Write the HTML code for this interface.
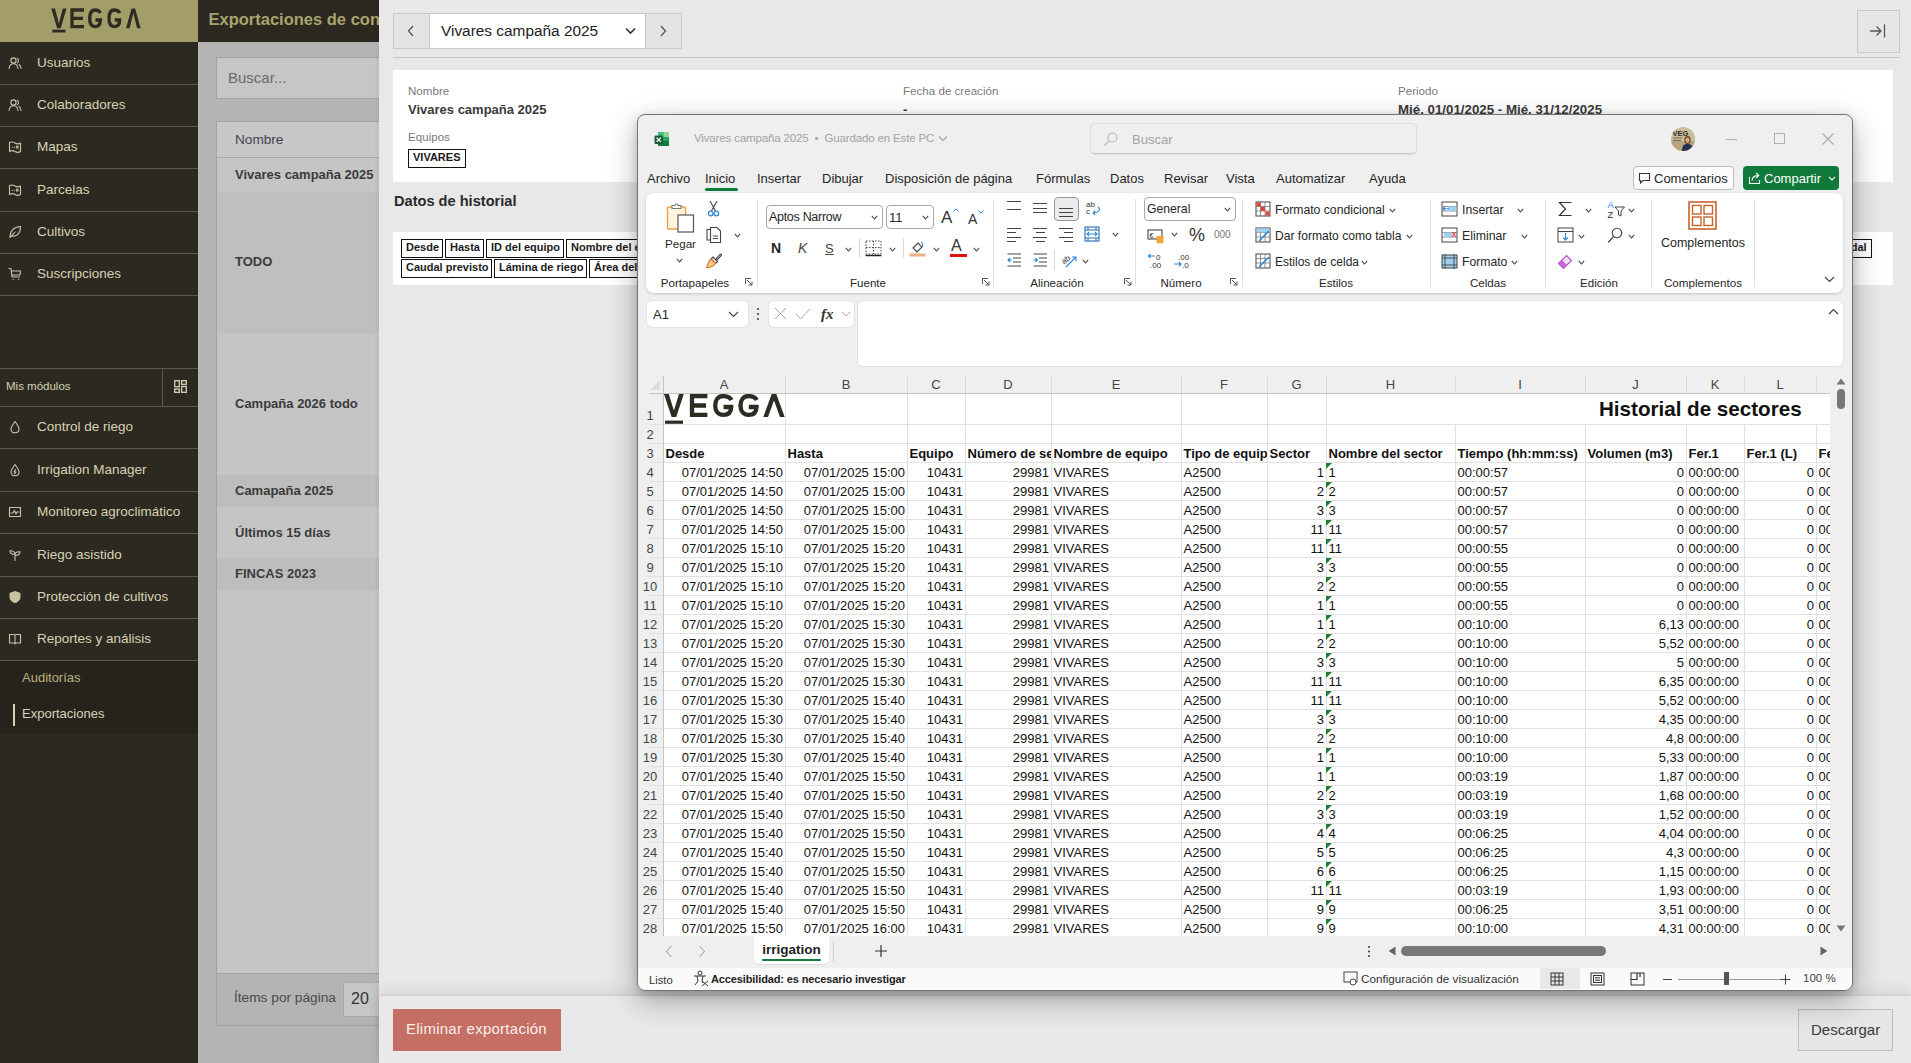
<!DOCTYPE html><html><head><meta charset="utf-8"><style>
*{box-sizing:border-box;margin:0;padding:0}
html,body{width:1911px;height:1063px;overflow:hidden;font-family:"Liberation Sans",sans-serif;background:#e8e8e8}
.abs{position:absolute}
.t{position:absolute;white-space:nowrap;line-height:1}
#sb{left:0;top:0;width:198px;height:1063px;background:#2c2920}
#logo{left:0;top:0;width:198px;height:42px;background:#a39e69}
.sl{position:absolute;left:0;width:198px;height:1px;background:#5a574e}
.mt{position:absolute;left:37px;color:#d8d3b6;font-size:13.5px;white-space:nowrap;line-height:1}
.ic{position:absolute;left:9px}
#mid{left:198px;top:0;width:181px;height:1063px;background:#b5b5b5;overflow:hidden}
#midh{left:0;top:0;width:181px;height:42px;background:#2c2820;color:#a9a36f;font-weight:bold;font-size:16.5px;white-space:nowrap}
.row{position:absolute;left:19px;width:170px}
.rt{position:absolute;left:18px;font-size:13px;font-weight:bold;color:#3b3b3b;white-space:nowrap;line-height:1}
#drawer{left:379px;top:0;width:1532px;height:1063px;background:#e8e8e8;box-shadow:-3px 0 3px rgba(0,0,0,0.04)}
.card{position:absolute;background:#fff}
.lbl{position:absolute;font-size:11.6px;color:#7a7a7a;white-space:nowrap;line-height:1}
.val{position:absolute;font-size:13px;font-weight:bold;color:#3a3a3a;white-space:nowrap;line-height:1}
.tag{position:absolute;height:19px;border:1.5px solid #111;font-size:11px;font-weight:bold;color:#1a1a1a;padding:2px 0 0 4px;white-space:nowrap;overflow:hidden;background:#fff;line-height:1}
#xl{left:637px;top:114px;width:1216px;height:876px;background:#efefef;border:1px solid #6e6e6e;border-radius:8px;overflow:hidden;box-shadow:0 6px 22px rgba(0,0,0,0.22)}
</style></head><body>
<div id="sb" class="abs">
<div id="logo" class="abs"></div>
<svg class="abs" style="left:50px;top:8px" width="94" height="26" viewBox="0 0 94 26">
<g fill="none" stroke="#2e2b22" stroke-width="3.3">

<path d="M34 2 H22 V18.7 H34 M22 10.3 H33"/>
<path d="M50.5 5 C49.5 3 47.8 2 45 2 C41.3 2 39.7 5.5 39.7 10.3 C39.7 15 41.3 18.6 45 18.6 C48.7 18.6 50.4 16 50.4 12 H45.5"/>
<path d="M69.8 5 C68.8 3 67.1 2 64.3 2 C60.6 2 59 5.5 59 10.3 C59 15 60.6 18.6 64.3 18.6 C68 18.6 69.7 16 69.7 12 H64.8"/>
</g>
<rect x="2.3" y="21.7" width="13.2" height="2.8" fill="#2e2b22"/><path d="M1.3 0.5 H5 L8.9 15.5 L12.8 0.5 H16.5 L10.7 20.2 H7.1 Z M76 20.2 H79.6 L83.35 5 L87.1 20.2 H90.7 L85.1 0.5 H81.6 Z" fill="#2e2b22"/>
</svg>
<div class="mt" style="top:56px">Usuarios</div>
<div class="mt" style="top:98px">Colaboradores</div>
<div class="mt" style="top:140px">Mapas</div>
<div class="mt" style="top:183px">Parcelas</div>
<div class="mt" style="top:225px">Cultivos</div>
<div class="mt" style="top:267px">Suscripciones</div>
<div class="sl" style="top:84px"></div>
<div class="sl" style="top:126px"></div>
<div class="sl" style="top:168px"></div>
<div class="sl" style="top:211px"></div>
<div class="sl" style="top:253px"></div>
<div class="sl" style="top:295px"></div>
<div class="sl" style="top:368px"></div>
<div class="sl" style="top:406px"></div>
<div class="sl" style="top:448px"></div>
<div class="sl" style="top:491px"></div>
<div class="sl" style="top:533px"></div>
<div class="sl" style="top:576px"></div>
<div class="sl" style="top:618px"></div>
<div class="sl" style="top:660px"></div>
<div class="abs" style="left:162px;top:368px;width:1px;height:38px;background:#5a574e"></div>
<div class="t" style="left:6px;top:381px;font-size:11.5px;color:#d8d3b6">Mis módulos</div>
<svg class="abs" style="left:174px;top:380px" width="13" height="13" viewBox="0 0 13 13"><g fill="none" stroke="#d8d3b6" stroke-width="1.3"><rect x="0.7" y="0.7" width="4.6" height="6"/><rect x="7.7" y="0.7" width="4.6" height="3.6"/><rect x="0.7" y="9" width="4.6" height="3.3"/><rect x="7.7" y="6.5" width="4.6" height="5.8"/></g></svg>
<div class="mt" style="top:420px">Control de riego</div>
<div class="mt" style="top:463px">Irrigation Manager</div>
<div class="mt" style="top:505px">Monitoreo agroclimático</div>
<div class="mt" style="top:548px">Riego asistido</div>
<div class="mt" style="top:590px">Protección de cultivos</div>
<div class="mt" style="top:632px">Reportes y análisis</div>
<div class="abs" style="left:0;top:661px;width:198px;height:73px;background:#26231d"></div>
<div class="t" style="left:22px;top:671px;font-size:13px;color:#b9b37e">Auditorías</div>
<div class="t" style="left:22px;top:707px;font-size:13px;color:#d8d3b6">Exportaciones</div>
<div class="abs" style="left:13px;top:704px;width:1.5px;height:22px;background:#d8d3b6"></div>
<svg class="abs" style="left:8px;top:56px" width="14" height="14" viewBox="0 0 14 14"><g fill="none" stroke="#c9c4ac" stroke-width="1.1" stroke-linecap="round" stroke-linejoin="round"><circle cx="5.5" cy="4.5" r="2.6"/><path d="M1 12.5 C1.5 9 3.5 7.8 5.5 7.8 C7.5 7.8 9.5 9 10 12.5"/><path d="M9.3 2.2 C10.8 2.8 10.8 6 9.3 6.8 M11 8.5 C12.3 9.2 12.8 10.8 13 12.5"/></g></svg>
<svg class="abs" style="left:8px;top:98px" width="14" height="14" viewBox="0 0 14 14"><g fill="none" stroke="#c9c4ac" stroke-width="1.1" stroke-linecap="round" stroke-linejoin="round"><circle cx="5.5" cy="4.5" r="2.6"/><path d="M1 12.5 C1.5 9 3.5 7.8 5.5 7.8 C7.5 7.8 9.5 9 10 12.5"/><path d="M9.3 2.2 C10.8 2.8 10.8 6 9.3 6.8 M11 8.5 C12.3 9.2 12.8 10.8 13 12.5"/></g></svg>
<svg class="abs" style="left:8px;top:140px" width="14" height="14" viewBox="0 0 14 14"><g fill="none" stroke="#c9c4ac" stroke-width="1.1" stroke-linecap="round" stroke-linejoin="round"><path d="M1.5 2.5 C3.5 1.5 5 1.8 7 3 C9 4.2 10.5 4.2 12.5 3 V11.5 C10.5 12.7 9 12.7 7 11.5 C5 10.3 3.5 10.3 1.5 11.5 Z"/><path d="M4.3 7.3 H4.6 M6.3 7.3 H6.6 M8.3 6.2 L10.2 8.2 M10.2 6.2 L8.3 8.2"/></g></svg>
<svg class="abs" style="left:8px;top:183px" width="14" height="14" viewBox="0 0 14 14"><g fill="none" stroke="#c9c4ac" stroke-width="1.1" stroke-linecap="round" stroke-linejoin="round"><path d="M1.5 2.5 C3.5 1.5 5 1.8 7 3 C9 4.2 10.5 4.2 12.5 3 V11.5 C10.5 12.7 9 12.7 7 11.5 C5 10.3 3.5 10.3 1.5 11.5 Z"/><path d="M4.3 7.3 H4.6 M6.3 7.3 H6.6 M8.3 6.2 L10.2 8.2 M10.2 6.2 L8.3 8.2"/></g></svg>
<svg class="abs" style="left:8px;top:225px" width="14" height="14" viewBox="0 0 14 14"><g fill="none" stroke="#c9c4ac" stroke-width="1.1" stroke-linecap="round" stroke-linejoin="round"><path d="M2 12.5 C2 6 6 2 12.5 1.5 C12.5 8 9 12 3.5 11 M2 12.5 L7 7"/></g></svg>
<svg class="abs" style="left:8px;top:267px" width="14" height="14" viewBox="0 0 14 14"><g fill="none" stroke="#c9c4ac" stroke-width="1.1" stroke-linecap="round" stroke-linejoin="round"><path d="M1 1.5 H3 L4 10 H11.5 M3.3 4 H12.5 L12 8 H3.8 M5 12.5 H5.3 M10.5 12.5 H10.8"/></g></svg>
<svg class="abs" style="left:8px;top:420px" width="14" height="14" viewBox="0 0 14 14"><g fill="none" stroke="#c9c4ac" stroke-width="1.1" stroke-linecap="round" stroke-linejoin="round"><path d="M7 1.5 C9 4.5 11 6.5 11 9 C11 11.3 9.2 12.8 7 12.8 C4.8 12.8 3 11.3 3 9 C3 6.5 5 4.5 7 1.5 Z"/></g></svg>
<svg class="abs" style="left:8px;top:463px" width="14" height="14" viewBox="0 0 14 14"><g fill="none" stroke="#c9c4ac" stroke-width="1.1" stroke-linecap="round" stroke-linejoin="round"><path d="M7 1.5 C9 4.5 11 6.5 11 9 C11 11.3 9.2 12.8 7 12.8 C4.8 12.8 3 11.3 3 9 C3 6.5 5 4.5 7 1.5 Z"/><path d="M7.5 6.5 L6 9 H8 L6.5 11"/></g></svg>
<svg class="abs" style="left:8px;top:505px" width="14" height="14" viewBox="0 0 14 14"><g fill="none" stroke="#c9c4ac" stroke-width="1.1" stroke-linecap="round" stroke-linejoin="round"><rect x="1.5" y="2.5" width="11" height="9"/><path d="M3 8 H5 L6.5 5.5 L8 9 L9 7 H11"/></g></svg>
<svg class="abs" style="left:8px;top:548px" width="14" height="14" viewBox="0 0 14 14"><g fill="none" stroke="#c9c4ac" stroke-width="1.1" stroke-linecap="round" stroke-linejoin="round"><path d="M7 12.5 V6.5 C7 4 5 2.5 2 2.8 C2 5.5 3.8 6.5 7 6.5 C7 4.5 9 3.5 12 3.8 C12 6.5 10 7.5 7 7.5"/></g></svg>
<svg class="abs" style="left:8px;top:590px" width="14" height="14" viewBox="0 0 14 14"><path d="M7 1 L12.5 3 V7 C12.5 10 10 12.3 7 13 C4 12.3 1.5 10 1.5 7 V3 Z" fill="#c7c2a0"/></svg>
<svg class="abs" style="left:8px;top:632px" width="14" height="14" viewBox="0 0 14 14"><g fill="none" stroke="#c9c4ac" stroke-width="1.1" stroke-linecap="round" stroke-linejoin="round"><path d="M1.5 2.5 H6 C6.6 2.5 7 2.9 7 3.5 V12 C7 11.5 6.5 11 6 11 H1.5 Z M12.5 2.5 H8 C7.4 2.5 7 2.9 7 3.5 V12 C7 11.5 7.5 11 8 11 H12.5 Z"/></g></svg>
</div>
<div id="mid" class="abs">
<div id="midh" class="abs"><span class="t" style="left:10.5px;top:11px;color:#a9a36f">Exportaciones de configuración</span></div>
<div class="abs" style="left:18px;top:57px;width:200px;height:42px;background:#c6c6c6;border:1px solid #a3a3a3"></div>
<div class="t" style="left:30px;top:70px;font-size:15px;color:#6a6a6a">Buscar...</div>
<div class="abs" style="left:18px;top:121px;width:200px;height:905px;border:1px solid #a3a3a3;background:#c5c5c5"></div>
<div class="abs" style="left:19px;top:122px;width:200px;height:36px;background:#c8c8c8;border-bottom:1px solid #a8a8a8"></div>
<div class="t" style="left:37px;top:133px;font-size:13.6px;color:#3f4650">Nombre</div>
<div class="row" style="top:159px;height:33px;background:#c5c5c5"></div>
<div class="rt" style="left:37px;top:168px">Vivares campaña 2025</div>
<div class="row" style="top:192px;height:141px;background:#bfbfbf"></div>
<div class="rt" style="left:37px;top:255px">TODO</div>
<div class="row" style="top:333px;height:142px;background:#c5c5c5"></div>
<div class="rt" style="left:37px;top:397px">Campaña 2026 todo</div>
<div class="row" style="top:475px;height:32px;background:#bdbdbd"></div>
<div class="rt" style="left:37px;top:484px">Camapaña 2025</div>
<div class="row" style="top:507px;height:51px;background:#c5c5c5"></div>
<div class="rt" style="left:37px;top:526px">Últimos 15 días</div>
<div class="row" style="top:558px;height:32px;background:#bdbdbd"></div>
<div class="rt" style="left:37px;top:567px">FINCAS 2023</div>
<div class="abs" style="left:18px;top:973px;width:200px;height:53px;background:#b4b4b4;border:1px solid #a3a3a3"></div>
<div class="t" style="left:36px;top:991px;font-size:13.7px;color:#4a4a4a">Ítems por página</div>
<div class="abs" style="left:145px;top:982px;width:60px;height:35px;background:#c6c6c6;border:1px solid #a8a8a8"></div>
<div class="t" style="left:153px;top:991px;font-size:16px;color:#333">20</div>
</div>
<div id="drawer" class="abs">
<div class="abs" style="left:14px;top:13px;width:289px;height:36px;border:1px solid #c8c8c8;background:#e4e4e4"></div>
<div class="abs" style="left:50px;top:14px;width:217px;height:34px;background:#fff;border-left:1px solid #c8c8c8;border-right:1px solid #c8c8c8"></div>
<div class="t" style="left:62px;top:23px;font-size:15.4px;color:#222">Vivares campaña 2025</div>
<svg class="abs" style="left:246px;top:27px" width="11" height="8" viewBox="0 0 11 8"><path d="M1 1.5 L5.5 6 L10 1.5" fill="none" stroke="#333" stroke-width="1.6"/></svg>
<svg class="abs" style="left:28px;top:25px" width="8" height="12" viewBox="0 0 8 12"><path d="M6 1 L1.5 6 L6 11" fill="none" stroke="#555" stroke-width="1.3"/></svg>
<svg class="abs" style="left:280px;top:25px" width="8" height="12" viewBox="0 0 8 12"><path d="M2 1 L6.5 6 L2 11" fill="none" stroke="#555" stroke-width="1.3"/></svg>
<div class="abs" style="left:1478px;top:10px;width:43px;height:43px;border:1px solid #c8c8c8;background:#e6e6e6"></div>
<svg class="abs" style="left:1490px;top:22px" width="18" height="18" viewBox="0 0 18 18"><path d="M1 9 H12 M7.5 4.5 L12 9 L7.5 13.5 M15.5 2.5 V15.5" fill="none" stroke="#555" stroke-width="1.3"/></svg>
<div class="abs" style="left:14px;top:57px;width:1507px;height:1px;background:#c4c4c4"></div>
<div class="card" style="left:14px;top:70px;width:1500px;height:112px"></div>
<div class="lbl" style="left:29px;top:85px">Nombre</div>
<div class="val" style="left:29px;top:103px">Vivares campaña 2025</div>
<div class="lbl" style="left:29px;top:131px">Equipos</div>
<div class="tag" style="left:29px;top:149px;width:58px">VIVARES</div>
<div class="lbl" style="left:524px;top:85px">Fecha de creación</div>
<div class="val" style="left:524px;top:103px">-</div>
<div class="lbl" style="left:1019px;top:85px">Periodo</div>
<div class="val" style="left:1019px;top:103px;font-size:13.3px">Mié. 01/01/2025 - Mié. 31/12/2025</div>
<div class="t" style="left:15px;top:194px;font-size:14.6px;font-weight:bold;color:#2a2a2a">Datos de historial</div>
<div class="card" style="left:14px;top:232px;width:1500px;height:53px"></div>
<div class="tag" style="left:22px;top:239px;width:42px">Desde</div>
<div class="tag" style="left:66px;top:239px;width:39px">Hasta</div>
<div class="tag" style="left:107px;top:239px;width:78px">ID del equipo</div>
<div class="tag" style="left:187px;top:239px;width:134px">Nombre del equipo</div>
<div class="tag" style="left:22px;top:259px;width:91px">Caudal previsto</div>
<div class="tag" style="left:115px;top:259px;width:93px">Lámina de riego</div>
<div class="tag" style="left:210px;top:259px;width:111px">Área del sector</div>
<div class="tag" style="left:1440px;top:239px;width:53px;padding-left:10px">Caudal</div>
<div class="abs" style="left:0;top:996px;width:1532px;height:67px;background:#e9e9e9;box-shadow:0 -4px 14px rgba(0,0,0,0.10),0 -1px 2px rgba(0,0,0,0.05)"></div>
<div class="abs" style="left:14px;top:1009px;width:168px;height:42px;background:#c46e64"></div>
<div class="t" style="left:27px;top:1021px;font-size:15px;letter-spacing:0.25px;color:#fbeeea">Eliminar exportación</div>
<div class="abs" style="left:1419px;top:1009px;width:95px;height:42px;border:1px solid #bcbcbc;background:#e6e6e6"></div>
<div class="t" style="left:1432px;top:1022px;font-size:15px;color:#3a3a3a">Descargar</div>
</div>
<div class="abs" style="left:637px;top:114px;width:1216px;height:877px;background:#efefef;border-radius:8px;box-shadow:0 10px 30px rgba(0,0,0,0.30),0 3px 8px rgba(0,0,0,0.16)"></div>
<svg class="abs" style="left:654px;top:131px" width="16" height="16" viewBox="0 0 16 16"><rect x="4" y="1" width="11" height="14" rx="1.5" fill="#21a366"/><rect x="4" y="1" width="5.5" height="5" fill="#33c481"/><rect x="9.5" y="1" width="5.5" height="5" fill="#9ad48a"/><rect x="4" y="10" width="11" height="5" fill="#107c41"/><rect x="0.5" y="4.5" width="8.5" height="8.5" rx="1.2" fill="#185c37"/><path d="M2.6 6.6 L6.9 10.9 M6.9 6.6 L2.6 10.9" stroke="#fff" stroke-width="1.3"/></svg>
<div class="t" style="left:694px;top:133.2px;font-size:11.5px;color:#a2a2a2;font-weight:normal;letter-spacing:-0.15px">Vivares campaña 2025 &nbsp;•&nbsp; Guardado en Este PC</div>
<svg class="abs" style="left:938px;top:135px" width="10" height="7" viewBox="0 0 10 7"><path d="M1 1.5 L5 5.5 L9 1.5" fill="none" stroke="#a2a2a2" stroke-width="1.1"/></svg>
<div class="abs" style="left:1090px;top:123px;width:327px;height:31px;background:#efefef;border:1px solid #dcdcdc;border-bottom-color:#c9c9c9;border-radius:5px;box-shadow:0 1px 1px rgba(0,0,0,0.06)"></div>
<svg class="abs" style="left:1103px;top:131px" width="16" height="16" viewBox="0 0 16 16"><circle cx="9.5" cy="6.5" r="4.5" fill="none" stroke="#b5b5b5" stroke-width="1.1"/><path d="M6.3 9.7 L1.5 14.5" stroke="#b5b5b5" stroke-width="1.2"/></svg>
<div class="t" style="left:1132px;top:132.5px;font-size:13px;color:#a3a3a3;font-weight:normal;">Buscar</div>
<svg class="abs" style="left:1671px;top:127px" width="24" height="24" viewBox="0 0 24 24"><defs><clipPath id="av"><circle cx="12" cy="12" r="12"/></clipPath></defs><g clip-path="url(#av)"><rect width="24" height="24" fill="#cbbd9a"/><rect y="14" width="24" height="10" fill="#b8a57e"/><text x="1.5" y="8.5" font-size="7.5" font-weight="bold" fill="#2e2c22" font-family="Liberation Sans">VEG</text><path d="M2 11 H11 M2 13.5 H10" stroke="#5a5040" stroke-width="0.8"/><ellipse cx="16.5" cy="13" rx="3.2" ry="4" fill="#6b4a2e"/><path d="M11 24 C11 18 13 17 16.5 17 C20 17 22 18 22 24 Z" fill="#26324e"/><ellipse cx="16.5" cy="13.2" rx="2" ry="2.6" fill="#d9a98a"/></g></svg>
<div class="abs" style="left:1726px;top:139px;width:11px;height:1px;background:#b0b0b0"></div>
<div class="abs" style="left:1774px;top:133px;width:11px;height:11px;border:1px solid #b0b0b0"></div>
<svg class="abs" style="left:1822px;top:133px" width="12" height="12" viewBox="0 0 12 12"><path d="M0.5 0.5 L11.5 11.5 M11.5 0.5 L0.5 11.5" stroke="#a8a8a8" stroke-width="1.1"/></svg>
<div class="t" style="left:647px;top:171.5px;font-size:13px;color:#262626;font-weight:normal;">Archivo</div>
<div class="t" style="left:705px;top:171.5px;font-size:13px;color:#262626;font-weight:normal;">Inicio</div>
<div class="t" style="left:757px;top:171.5px;font-size:13px;color:#262626;font-weight:normal;">Insertar</div>
<div class="t" style="left:822px;top:171.5px;font-size:13px;color:#262626;font-weight:normal;">Dibujar</div>
<div class="t" style="left:885px;top:171.5px;font-size:13px;color:#262626;font-weight:normal;">Disposición de página</div>
<div class="t" style="left:1036px;top:171.5px;font-size:13px;color:#262626;font-weight:normal;">Fórmulas</div>
<div class="t" style="left:1110px;top:171.5px;font-size:13px;color:#262626;font-weight:normal;">Datos</div>
<div class="t" style="left:1164px;top:171.5px;font-size:13px;color:#262626;font-weight:normal;">Revisar</div>
<div class="t" style="left:1226px;top:171.5px;font-size:13px;color:#262626;font-weight:normal;">Vista</div>
<div class="t" style="left:1276px;top:171.5px;font-size:13px;color:#262626;font-weight:normal;">Automatizar</div>
<div class="t" style="left:1369px;top:171.5px;font-size:13px;color:#262626;font-weight:normal;">Ayuda</div>
<div class="abs" style="left:705px;top:188px;width:33px;height:3px;background:#0f7b3e;border-radius:1.5px"></div>
<div class="abs" style="left:1633px;top:166px;width:101px;height:24px;background:#fcfcfc;border:1px solid #bdbdbd;border-radius:4px"></div>
<svg class="abs" style="left:1638px;top:172px" width="13" height="13" viewBox="0 0 13 13"><path d="M1.5 1.5 H11.5 V8.5 H5 L2.5 11 V8.5 H1.5 Z" fill="none" stroke="#333" stroke-width="1.1"/></svg>
<div class="t" style="left:1654px;top:171.5px;font-size:13px;color:#262626;font-weight:normal;">Comentarios</div>
<div class="abs" style="left:1743px;top:166px;width:96px;height:24px;background:#117a3b;border-radius:4px"></div>
<svg class="abs" style="left:1748px;top:171px" width="14" height="14" viewBox="0 0 14 14"><path d="M1.5 6 V12.5 H11.5 V9" fill="none" stroke="#fff" stroke-width="1.1"/><path d="M4 9.5 C4.5 6 7 4.5 10 4.5 M8 2 L10.8 4.5 L8 7" fill="none" stroke="#fff" stroke-width="1.1"/></svg>
<div class="t" style="left:1764px;top:171.5px;font-size:13px;color:#ffffff;font-weight:normal;">Compartir</div>
<svg class="abs" style="left:1828px;top:176px" width="8" height="5" viewBox="0 0 8 5"><path d="M1 0.8 L4 3.8 L7 0.8" fill="none" stroke="#fff" stroke-width="1.2"/></svg>
<div class="abs" style="left:646px;top:193px;width:1197px;height:100px;background:#fff;border-radius:8px;box-shadow:0 1px 3px rgba(0,0,0,0.18)"></div>
<div class="abs" style="left:757px;top:199px;width:1px;height:88px;background:#e0e0e0"></div>
<div class="abs" style="left:993px;top:199px;width:1px;height:88px;background:#e0e0e0"></div>
<div class="abs" style="left:1135px;top:199px;width:1px;height:88px;background:#e0e0e0"></div>
<div class="abs" style="left:1242px;top:199px;width:1px;height:88px;background:#e0e0e0"></div>
<div class="abs" style="left:1430px;top:199px;width:1px;height:88px;background:#e0e0e0"></div>
<div class="abs" style="left:1545px;top:199px;width:1px;height:88px;background:#e0e0e0"></div>
<div class="abs" style="left:1651px;top:199px;width:1px;height:88px;background:#e0e0e0"></div>
<div class="abs" style="left:1754px;top:199px;width:1px;height:88px;background:#e0e0e0"></div>
<div class="t" style="left:595px;width:200px;text-align:center;top:276.8px;font-size:11.6px;color:#262626">Portapapeles</div>
<div class="t" style="left:768px;width:200px;text-align:center;top:276.8px;font-size:11.6px;color:#262626">Fuente</div>
<div class="t" style="left:957px;width:200px;text-align:center;top:276.8px;font-size:11.6px;color:#262626">Alineación</div>
<div class="t" style="left:1081px;width:200px;text-align:center;top:276.8px;font-size:11.6px;color:#262626">Número</div>
<div class="t" style="left:1236px;width:200px;text-align:center;top:276.8px;font-size:11.6px;color:#262626">Estilos</div>
<div class="t" style="left:1388px;width:200px;text-align:center;top:276.8px;font-size:11.6px;color:#262626">Celdas</div>
<div class="t" style="left:1499px;width:200px;text-align:center;top:276.8px;font-size:11.6px;color:#262626">Edición</div>
<div class="t" style="left:1603px;width:200px;text-align:center;top:276.8px;font-size:11.6px;color:#262626">Complementos</div>
<svg class="abs" style="left:745px;top:278px" width="8" height="8" viewBox="0 0 8 8"><path d="M0.5 6 V0.5 H6 M2 2 L7 7 M7 3.5 V7 H3.5" fill="none" stroke="#555" stroke-width="1"/></svg>
<svg class="abs" style="left:982px;top:278px" width="8" height="8" viewBox="0 0 8 8"><path d="M0.5 6 V0.5 H6 M2 2 L7 7 M7 3.5 V7 H3.5" fill="none" stroke="#555" stroke-width="1"/></svg>
<svg class="abs" style="left:1124px;top:278px" width="8" height="8" viewBox="0 0 8 8"><path d="M0.5 6 V0.5 H6 M2 2 L7 7 M7 3.5 V7 H3.5" fill="none" stroke="#555" stroke-width="1"/></svg>
<svg class="abs" style="left:1230px;top:278px" width="8" height="8" viewBox="0 0 8 8"><path d="M0.5 6 V0.5 H6 M2 2 L7 7 M7 3.5 V7 H3.5" fill="none" stroke="#555" stroke-width="1"/></svg>
<svg class="abs" style="left:666px;top:202px" width="30" height="32" viewBox="0 0 30 32"><rect x="1.5" y="5" width="18" height="22" rx="1" fill="#fff4e0" stroke="#e8a33d" stroke-width="1.4"/><path d="M6 6.5 V3.5 H9 C9 1.5 12 1.5 12 3.5 H15 V6.5 Z" fill="#fff" stroke="#777" stroke-width="1.1"/><rect x="12" y="13" width="15.5" height="17" fill="#fff" stroke="#555" stroke-width="1.2"/></svg>
<div class="t" style="left:665px;top:238.2px;font-size:11.6px;color:#262626;font-weight:normal;">Pegar</div>
<svg class="abs" style="left:676px;top:258px" width="7" height="5" viewBox="0 0 7 5"><path d="M0.8 0.8 L3.5 4 L6.2 0.8" fill="none" stroke="#444" stroke-width="1.1"/></svg>
<svg class="abs" style="left:707px;top:200px" width="13" height="18" viewBox="0 0 13 18"><path d="M3 1 L8.5 11 M10 1 L4.5 11" stroke="#444" stroke-width="1.1"/><circle cx="3.7" cy="13.5" r="2.3" fill="none" stroke="#2b88d8" stroke-width="1.3"/><circle cx="9.3" cy="13.5" r="2.3" fill="none" stroke="#2b88d8" stroke-width="1.3"/></svg>
<svg class="abs" style="left:705px;top:226px" width="17" height="18" viewBox="0 0 17 18"><path d="M5 3.5 H2 V14 H5" fill="none" stroke="#444" stroke-width="1.1"/><path d="M5.5 1.5 H12 L15.5 5 V16.5 H5.5 Z" fill="#fff" stroke="#444" stroke-width="1.1"/><path d="M8 10 H13 M8 12.5 H13" stroke="#444" stroke-width="1"/></svg>
<svg class="abs" style="left:734px;top:233px" width="7" height="5" viewBox="0 0 7 5"><path d="M0.8 0.8 L3.5 4 L6.2 0.8" fill="none" stroke="#444" stroke-width="1.1"/></svg>
<svg class="abs" style="left:705px;top:252px" width="18" height="17" viewBox="0 0 18 17"><path d="M10.5 7.5 L15 2.5 C15.8 1.7 17 2.9 16.2 3.7 L11.5 8.5" fill="#fff" stroke="#444" stroke-width="1.1"/><path d="M8 5 L12.5 9.5 L10.5 11.5 L6 7 Z" fill="#fff" stroke="#444" stroke-width="1.1"/><path d="M6 7 L10.5 11.5 C9 14 6 15.5 1.5 15.5 C3 13.5 2.5 10 6 7 Z" fill="#f9c88a" stroke="#d9782a" stroke-width="1.1"/></svg>
<div class="abs" style="left:766px;top:205px;width:117px;height:24px;border:1px solid #a8a8a8;border-radius:4px;background:#fff"></div>
<div class="t" style="left:769px;top:210.8px;font-size:12.5px;color:#262626;font-weight:normal;letter-spacing:-0.3px">Aptos Narrow</div>
<svg class="abs" style="left:871px;top:215px" width="7" height="5" viewBox="0 0 7 5"><path d="M0.8 0.8 L3.5 4 L6.2 0.8" fill="none" stroke="#444" stroke-width="1.1"/></svg>
<div class="abs" style="left:886px;top:205px;width:48px;height:24px;border:1px solid #a8a8a8;border-radius:4px;background:#fff"></div>
<div class="t" style="left:889px;top:210.5px;font-size:13px;color:#262626;font-weight:normal;">11</div>
<svg class="abs" style="left:922px;top:215px" width="7" height="5" viewBox="0 0 7 5"><path d="M0.8 0.8 L3.5 4 L6.2 0.8" fill="none" stroke="#444" stroke-width="1.1"/></svg>
<div class="t" style="left:941px;top:208.5px;font-size:17px;color:#333;font-weight:normal;">A</div>
<svg class="abs" style="left:953px;top:208px" width="6" height="4" viewBox="0 0 6 4"><path d="M0.5 3.5 L3 0.8 L5.5 3.5" fill="none" stroke="#2b88d8" stroke-width="1"/></svg>
<div class="t" style="left:968px;top:212.0px;font-size:14px;color:#333;font-weight:normal;">A</div>
<svg class="abs" style="left:978px;top:210px" width="6" height="4" viewBox="0 0 6 4"><path d="M0.5 0.5 L3 3.2 L5.5 0.5" fill="none" stroke="#2b88d8" stroke-width="1"/></svg>
<div class="t" style="left:771px;top:241.0px;font-size:14px;color:#262626;font-weight:bold;">N</div>
<div class="t" style="left:798px;top:241.0px;font-size:14px;color:#444;font-weight:normal;font-style:italic">K</div>
<div class="t" style="left:825px;top:241.5px;font-size:13px;color:#444;font-weight:normal;text-decoration:underline">S</div>
<svg class="abs" style="left:845px;top:247px" width="7" height="5" viewBox="0 0 7 5"><path d="M0.8 0.8 L3.5 4 L6.2 0.8" fill="none" stroke="#444" stroke-width="1.1"/></svg>
<div class="abs" style="left:859px;top:238px;width:1px;height:20px;background:#d8d8d8"></div>
<svg class="abs" style="left:865px;top:240px" width="17" height="17" viewBox="0 0 17 17"><rect x="1" y="1" width="15" height="13" fill="none" stroke="#444" stroke-width="1" stroke-dasharray="1.5 1.5"/><path d="M8.5 1 V14 M1 7.5 H16" stroke="#444" stroke-width="1" stroke-dasharray="1.5 1.5"/><path d="M0.5 15.5 H16.5" stroke="#222" stroke-width="1.5"/></svg>
<svg class="abs" style="left:889px;top:247px" width="7" height="5" viewBox="0 0 7 5"><path d="M0.8 0.8 L3.5 4 L6.2 0.8" fill="none" stroke="#444" stroke-width="1.1"/></svg>
<div class="abs" style="left:903px;top:238px;width:1px;height:20px;background:#d8d8d8"></div>
<svg class="abs" style="left:909px;top:239px" width="18" height="18" viewBox="0 0 18 18"><path d="M4 9 L9 4 L13 8 L8 13 Z" fill="none" stroke="#444" stroke-width="1.1"/><path d="M12 3 C14 4 14 7 13 8" fill="none" stroke="#2b88d8" stroke-width="1.1"/><rect x="0.5" y="14.5" width="16" height="3" fill="#ebb088"/></svg>
<svg class="abs" style="left:933px;top:247px" width="7" height="5" viewBox="0 0 7 5"><path d="M0.8 0.8 L3.5 4 L6.2 0.8" fill="none" stroke="#444" stroke-width="1.1"/></svg>
<div class="t" style="left:951px;top:238.0px;font-size:16px;color:#333;font-weight:normal;">A</div>
<div class="abs" style="left:950px;top:254px;width:17px;height:3px;background:#e01010"></div>
<svg class="abs" style="left:973px;top:247px" width="7" height="5" viewBox="0 0 7 5"><path d="M0.8 0.8 L3.5 4 L6.2 0.8" fill="none" stroke="#444" stroke-width="1.1"/></svg>
<div class="abs" style="left:1007px;top:201px;width:14px;height:1.2px;background:#444"></div>
<div class="abs" style="left:1007px;top:209px;width:14px;height:1.2px;background:#444"></div>
<div class="abs" style="left:1033px;top:203px;width:14px;height:1.2px;background:#444"></div>
<div class="abs" style="left:1033px;top:207.5px;width:14px;height:1.2px;background:#444"></div>
<div class="abs" style="left:1033px;top:212px;width:14px;height:1.2px;background:#444"></div>
<div class="abs" style="left:1054px;top:197px;width:25px;height:24px;background:#ebebeb;border:1px solid #999;border-radius:4px"></div>
<div class="abs" style="left:1059px;top:207.5px;width:14px;height:1.2px;background:#444"></div>
<div class="abs" style="left:1059px;top:211.5px;width:14px;height:1.2px;background:#444"></div>
<div class="abs" style="left:1059px;top:216px;width:14px;height:1.2px;background:#444"></div>
<svg class="abs" style="left:1085px;top:200px" width="16" height="17" viewBox="0 0 16 17"><text x="1" y="7" font-size="8" fill="#333" font-family="Liberation Sans">ab</text><text x="1" y="14" font-size="8" fill="#333" font-family="Liberation Sans">c</text><path d="M13 7 C16 9 14 13 8 13 M10 11 L8 13 L10 15" fill="none" stroke="#2b88d8" stroke-width="1.1"/></svg>
<div class="abs" style="left:1007px;top:228px;width:14px;height:1.2px;background:#444"></div>
<div class="abs" style="left:1033px;top:228px;width:14px;height:1.2px;background:#444"></div>
<div class="abs" style="left:1059px;top:228px;width:14px;height:1.2px;background:#444"></div>
<div class="abs" style="left:1007px;top:232px;width:9px;height:1.2px;background:#444"></div>
<div class="abs" style="left:1035.5px;top:232px;width:9px;height:1.2px;background:#444"></div>
<div class="abs" style="left:1064px;top:232px;width:9px;height:1.2px;background:#444"></div>
<div class="abs" style="left:1007px;top:236.5px;width:14px;height:1.2px;background:#444"></div>
<div class="abs" style="left:1033px;top:236.5px;width:14px;height:1.2px;background:#444"></div>
<div class="abs" style="left:1059px;top:236.5px;width:14px;height:1.2px;background:#444"></div>
<div class="abs" style="left:1007px;top:240.5px;width:9px;height:1.2px;background:#444"></div>
<div class="abs" style="left:1035.5px;top:240.5px;width:9px;height:1.2px;background:#444"></div>
<div class="abs" style="left:1064px;top:240.5px;width:9px;height:1.2px;background:#444"></div>
<svg class="abs" style="left:1084px;top:226px" width="16" height="16" viewBox="0 0 16 16"><rect x="1" y="1" width="14" height="14" fill="none" stroke="#2b6cb0" stroke-width="1.1"/><path d="M1 4 H15 M1 12 H15 M4 1 V4 M12 1 V4 M4 12 V15 M12 12 V15" stroke="#2b6cb0" stroke-width="1"/><path d="M3 8 H13 M5 6 L3 8 L5 10 M11 6 L13 8 L11 10" fill="none" stroke="#2b88d8" stroke-width="1.1"/></svg>
<svg class="abs" style="left:1112px;top:232px" width="7" height="5" viewBox="0 0 7 5"><path d="M0.8 0.8 L3.5 4 L6.2 0.8" fill="none" stroke="#444" stroke-width="1.1"/></svg>
<svg class="abs" style="left:1007px;top:253px" width="15" height="14" viewBox="0 0 15 14"><path d="M0.5 1 H14 M6 5 H14 M6 9 H14 M0.5 13 H14" stroke="#444" stroke-width="1.1"/><path d="M5 7 H1 M3 5 L1 7 L3 9" fill="none" stroke="#2b88d8" stroke-width="1.1"/></svg>
<svg class="abs" style="left:1033px;top:253px" width="15" height="14" viewBox="0 0 15 14"><path d="M0.5 1 H14 M6 5 H14 M6 9 H14 M0.5 13 H14" stroke="#444" stroke-width="1.1"/><path d="M0.5 7 H4.5 M2.5 5 L4.5 7 L2.5 9" fill="none" stroke="#2b88d8" stroke-width="1.1"/></svg>
<div class="abs" style="left:1054px;top:250px;width:1px;height:20px;background:#d8d8d8"></div>
<svg class="abs" style="left:1061px;top:252px" width="17" height="17" viewBox="0 0 17 17"><text x="0" y="10" font-size="8" fill="#333" font-family="Liberation Sans" transform="rotate(-40 5 7)">ab</text><path d="M5 15 L15 5 M11 5 H15 V9" fill="none" stroke="#2b88d8" stroke-width="1.1"/></svg>
<svg class="abs" style="left:1082px;top:259px" width="7" height="5" viewBox="0 0 7 5"><path d="M0.8 0.8 L3.5 4 L6.2 0.8" fill="none" stroke="#444" stroke-width="1.1"/></svg>
<div class="abs" style="left:1144px;top:197px;width:92px;height:24px;border:1px solid #a8a8a8;border-radius:4px;background:#fff"></div>
<div class="t" style="left:1147px;top:202.9px;font-size:12.2px;color:#262626;font-weight:normal;">General</div>
<svg class="abs" style="left:1224px;top:207px" width="7" height="5" viewBox="0 0 7 5"><path d="M0.8 0.8 L3.5 4 L6.2 0.8" fill="none" stroke="#444" stroke-width="1.1"/></svg>
<svg class="abs" style="left:1147px;top:228px" width="18" height="16" viewBox="0 0 18 16"><rect x="1" y="2" width="14" height="9" fill="none" stroke="#444" stroke-width="1.1"/><text x="2.5" y="9.5" font-size="7" fill="#333" font-family="Liberation Sans">€</text><ellipse cx="13" cy="9" rx="3.5" ry="1.3" fill="#f2a33a"/><rect x="9.5" y="9" width="7" height="5" fill="#f2a33a"/><ellipse cx="13" cy="14" rx="3.5" ry="1.3" fill="#f2a33a"/></svg>
<svg class="abs" style="left:1171px;top:232px" width="7" height="5" viewBox="0 0 7 5"><path d="M0.8 0.8 L3.5 4 L6.2 0.8" fill="none" stroke="#444" stroke-width="1.1"/></svg>
<div class="t" style="left:1189px;top:226.0px;font-size:18px;color:#333;font-weight:normal;">%</div>
<div class="t" style="left:1214px;top:230.0px;font-size:10px;color:#777;font-weight:normal;">000</div>
<svg class="abs" style="left:1147px;top:252px" width="18" height="17" viewBox="0 0 18 17"><path d="M8 4 H1.5 M3.5 2 L1.5 4 L3.5 6" fill="none" stroke="#2b88d8" stroke-width="1.1"/><text x="9" y="8" font-size="8" fill="#333" font-family="Liberation Sans">0</text><text x="3" y="16" font-size="8" fill="#333" font-family="Liberation Sans">.00</text></svg>
<svg class="abs" style="left:1173px;top:252px" width="18" height="17" viewBox="0 0 18 17"><text x="5" y="8" font-size="8" fill="#333" font-family="Liberation Sans">.00</text><path d="M1 12 H8 M6 10 L8 12 L6 14" fill="none" stroke="#2b88d8" stroke-width="1.1"/><text x="9" y="16" font-size="8" fill="#333" font-family="Liberation Sans">.0</text></svg>
<svg class="abs" style="left:1255px;top:201px" width="16" height="16" viewBox="0 0 16 16"><rect x="1" y="1" width="14" height="14" fill="#fff" stroke="#444" stroke-width="1"/><path d="M1 5.5 H15 M1 10 H15 M5.5 1 V15 M10 1 V15" stroke="#777" stroke-width="0.8"/><rect x="1.5" y="1.5" width="4" height="4" fill="#e0443e"/><rect x="6" y="6" width="4" height="4" fill="#e0443e"/><rect x="10.5" y="10.5" width="4" height="4" fill="#e0443e"/></svg>
<div class="t" style="left:1275px;top:203.9px;font-size:12.2px;color:#262626;font-weight:normal;">Formato condicional</div>
<svg class="abs" style="left:1389px;top:208px" width="7" height="5" viewBox="0 0 7 5"><path d="M0.8 0.8 L3.5 4 L6.2 0.8" fill="none" stroke="#444" stroke-width="1.1"/></svg>
<svg class="abs" style="left:1255px;top:227px" width="16" height="16" viewBox="0 0 16 16"><rect x="1" y="1" width="14" height="14" fill="#fff" stroke="#444" stroke-width="1"/><path d="M1 5.5 H15 M1 10 H15 M5.5 1 V15 M10 1 V15" stroke="#777" stroke-width="0.8"/><rect x="1.5" y="1.5" width="13" height="4" fill="#9fd0f0"/><path d="M4 14 L14 4" stroke="#2b88d8" stroke-width="1.6"/></svg>
<div class="t" style="left:1275px;top:229.9px;font-size:12.1px;color:#262626;font-weight:normal;">Dar formato como tabla</div>
<svg class="abs" style="left:1406px;top:234px" width="7" height="5" viewBox="0 0 7 5"><path d="M0.8 0.8 L3.5 4 L6.2 0.8" fill="none" stroke="#444" stroke-width="1.1"/></svg>
<svg class="abs" style="left:1255px;top:253px" width="16" height="16" viewBox="0 0 16 16"><rect x="1" y="1" width="14" height="14" fill="#fff" stroke="#444" stroke-width="1"/><path d="M1 5.5 H15 M1 10 H15 M5.5 1 V15 M10 1 V15" stroke="#777" stroke-width="0.8"/><path d="M4 14 L14 4" stroke="#2b88d8" stroke-width="1.6"/></svg>
<div class="t" style="left:1275px;top:256.0px;font-size:12px;color:#262626;font-weight:normal;">Estilos de celda</div>
<svg class="abs" style="left:1361px;top:260px" width="7" height="5" viewBox="0 0 7 5"><path d="M0.8 0.8 L3.5 4 L6.2 0.8" fill="none" stroke="#444" stroke-width="1.1"/></svg>
<svg class="abs" style="left:1441px;top:201px" width="17" height="16" viewBox="0 0 17 16"><rect x="1" y="1" width="15" height="14" fill="#fff" stroke="#444" stroke-width="1"/><path d="M1 5.5 H16 M1 10 H16" stroke="#777" stroke-width="0.8"/><rect x="7" y="5.5" width="8.5" height="4.5" fill="#9fd0f0"/><path d="M8 7.7 H2 M4 5.7 L2 7.7 L4 9.7" fill="none" stroke="#2b88d8" stroke-width="1.1"/></svg>
<div class="t" style="left:1462px;top:203.8px;font-size:12.3px;color:#262626;font-weight:normal;">Insertar</div>
<svg class="abs" style="left:1517px;top:208px" width="7" height="5" viewBox="0 0 7 5"><path d="M0.8 0.8 L3.5 4 L6.2 0.8" fill="none" stroke="#444" stroke-width="1.1"/></svg>
<svg class="abs" style="left:1441px;top:227px" width="17" height="16" viewBox="0 0 17 16"><rect x="1" y="1" width="15" height="14" fill="#fff" stroke="#444" stroke-width="1"/><path d="M1 5.5 H16 M1 10 H16" stroke="#777" stroke-width="0.8"/><rect x="3" y="5.5" width="8" height="4.5" fill="#9fd0f0"/><path d="M11 5 L15 10 M15 5 L11 10" stroke="#e0443e" stroke-width="1.2"/></svg>
<div class="t" style="left:1462px;top:229.8px;font-size:12.3px;color:#262626;font-weight:normal;">Eliminar</div>
<svg class="abs" style="left:1521px;top:234px" width="7" height="5" viewBox="0 0 7 5"><path d="M0.8 0.8 L3.5 4 L6.2 0.8" fill="none" stroke="#444" stroke-width="1.1"/></svg>
<svg class="abs" style="left:1441px;top:253px" width="17" height="16" viewBox="0 0 17 16"><rect x="1" y="2" width="15" height="13" fill="#9fd0f0" stroke="#444" stroke-width="1"/><path d="M1 5 H16 M4 1 V16 M13 1 V16 M1 12 H16" stroke="#444" stroke-width="0.9"/></svg>
<div class="t" style="left:1462px;top:255.9px;font-size:12.2px;color:#262626;font-weight:normal;">Formato</div>
<svg class="abs" style="left:1511px;top:260px" width="7" height="5" viewBox="0 0 7 5"><path d="M0.8 0.8 L3.5 4 L6.2 0.8" fill="none" stroke="#444" stroke-width="1.1"/></svg>
<svg class="abs" style="left:1558px;top:201px" width="15" height="16" viewBox="0 0 15 16"><path d="M13.5 1.5 H1.5 L7.5 8 L1.5 14.5 H13.5" fill="none" stroke="#333" stroke-width="1.2" stroke-linejoin="miter"/></svg>
<svg class="abs" style="left:1585px;top:208px" width="7" height="5" viewBox="0 0 7 5"><path d="M0.8 0.8 L3.5 4 L6.2 0.8" fill="none" stroke="#444" stroke-width="1.1"/></svg>
<svg class="abs" style="left:1607px;top:199px" width="19" height="20" viewBox="0 0 19 20"><text x="0.5" y="9" font-size="9.5" fill="#2b88d8" font-family="Liberation Sans">A</text><text x="0.5" y="19" font-size="9.5" fill="#333" font-family="Liberation Sans">Z</text><path d="M8 8 H17.5 L14 12 V17 L11.5 16 V12 Z" fill="none" stroke="#444" stroke-width="1"/></svg>
<svg class="abs" style="left:1628px;top:208px" width="7" height="5" viewBox="0 0 7 5"><path d="M0.8 0.8 L3.5 4 L6.2 0.8" fill="none" stroke="#444" stroke-width="1.1"/></svg>
<svg class="abs" style="left:1557px;top:227px" width="17" height="16" viewBox="0 0 17 16"><rect x="1" y="1" width="15" height="14" fill="#fff" stroke="#444" stroke-width="1"/><path d="M1 4.5 H16" stroke="#444" stroke-width="1"/><path d="M8.5 6 V13 M6 10.5 L8.5 13 L11 10.5" fill="none" stroke="#2b88d8" stroke-width="1.1"/></svg>
<svg class="abs" style="left:1578px;top:234px" width="7" height="5" viewBox="0 0 7 5"><path d="M0.8 0.8 L3.5 4 L6.2 0.8" fill="none" stroke="#444" stroke-width="1.1"/></svg>
<svg class="abs" style="left:1607px;top:227px" width="16" height="17" viewBox="0 0 16 17"><circle cx="10" cy="6" r="4.7" fill="none" stroke="#444" stroke-width="1.1"/><path d="M6.6 9.4 L1.2 15.5" stroke="#444" stroke-width="1.3"/></svg>
<svg class="abs" style="left:1628px;top:234px" width="7" height="5" viewBox="0 0 7 5"><path d="M0.8 0.8 L3.5 4 L6.2 0.8" fill="none" stroke="#444" stroke-width="1.1"/></svg>
<svg class="abs" style="left:1557px;top:253px" width="17" height="16" viewBox="0 0 17 16"><path d="M1.5 10.5 L9.5 2.5 L14.5 7.5 L6.5 15.5 Z" fill="#f3e0f8" stroke="#b14fc5" stroke-width="1.1"/><path d="M1.5 10.5 L5 7 L10 12 L6.5 15.5 Z" fill="#c865dc"/></svg>
<svg class="abs" style="left:1578px;top:260px" width="7" height="5" viewBox="0 0 7 5"><path d="M0.8 0.8 L3.5 4 L6.2 0.8" fill="none" stroke="#444" stroke-width="1.1"/></svg>
<svg class="abs" style="left:1688px;top:201px" width="29" height="29" viewBox="0 0 29 29"><rect x="1" y="1" width="27" height="27" fill="none" stroke="#c8642d" stroke-width="1.6"/><rect x="4.5" y="4.5" width="8.5" height="8.5" fill="none" stroke="#c8642d" stroke-width="1.4"/><rect x="16" y="4.5" width="8.5" height="8.5" fill="none" stroke="#c8642d" stroke-width="1.4"/><rect x="4.5" y="16" width="8.5" height="8.5" fill="none" stroke="#c8642d" stroke-width="1.4"/><rect x="16" y="16" width="8.5" height="8.5" fill="none" stroke="#c8642d" stroke-width="1.4"/></svg>
<div class="t" style="left:1603px;width:200px;text-align:center;top:236.5px;font-size:12.5px;color:#262626">Complementos</div>
<svg class="abs" style="left:1824px;top:276px" width="11" height="7" viewBox="0 0 11 7"><path d="M1 1 L5.5 5.5 L10 1" fill="none" stroke="#444" stroke-width="1.2"/></svg>
<div class="abs" style="left:647px;top:301px;width:101px;height:26px;background:#fff;border-radius:5px;box-shadow:0 0 0 1px #e3e3e3"></div>
<div class="t" style="left:653px;top:307.5px;font-size:13px;color:#262626;font-weight:normal;">A1</div>
<svg class="abs" style="left:728px;top:311px" width="11" height="7" viewBox="0 0 11 7"><path d="M1 1 L5.5 5.5 L10 1" fill="none" stroke="#444" stroke-width="1.2"/></svg>
<svg class="abs" style="left:756px;top:307px" width="4" height="14" viewBox="0 0 4 14"><circle cx="2" cy="2" r="1.1" fill="#444"/><circle cx="2" cy="7" r="1.1" fill="#444"/><circle cx="2" cy="12" r="1.1" fill="#444"/></svg>
<div class="abs" style="left:769px;top:301px;width:85px;height:26px;background:#fff;border-radius:5px;box-shadow:0 0 0 1px #e3e3e3"></div>
<svg class="abs" style="left:774px;top:307px" width="13" height="13" viewBox="0 0 13 13"><path d="M1 1 L12 12 M12 1 L1 12" stroke="#aaa" stroke-width="1"/></svg>
<svg class="abs" style="left:795px;top:308px" width="16" height="12" viewBox="0 0 16 12"><path d="M1 6 L5.5 11 L15 1" fill="none" stroke="#aaa" stroke-width="1"/></svg>
<div class="t" style="left:821px;top:306.5px;font-size:15px;color:#333;font-weight:normal;font-family:'Liberation Serif',serif;font-style:italic;font-weight:bold">fx</div>
<svg class="abs" style="left:841px;top:311px" width="10" height="6" viewBox="0 0 10 6"><path d="M1 1 L5 5 L9 1" fill="none" stroke="#aaa" stroke-width="1"/></svg>
<div class="abs" style="left:858px;top:301px;width:985px;height:65px;background:#fff;border-radius:5px;box-shadow:0 0 0 1px #e3e3e3"></div>
<svg class="abs" style="left:1828px;top:308px" width="11" height="7" viewBox="0 0 11 7"><path d="M1 6 L5.5 1.5 L10 6" fill="none" stroke="#444" stroke-width="1.2"/></svg>
<div class="abs" style="left:663px;top:393px;width:1167px;height:543px;background:#fff"></div>
<div class="t" style="left:704.0px;width:40px;text-align:center;top:378px;font-size:13px;color:#444">A</div>
<div class="t" style="left:826.0px;width:40px;text-align:center;top:378px;font-size:13px;color:#444">B</div>
<div class="t" style="left:916.0px;width:40px;text-align:center;top:378px;font-size:13px;color:#444">C</div>
<div class="t" style="left:988.0px;width:40px;text-align:center;top:378px;font-size:13px;color:#444">D</div>
<div class="t" style="left:1096.0px;width:40px;text-align:center;top:378px;font-size:13px;color:#444">E</div>
<div class="t" style="left:1204.0px;width:40px;text-align:center;top:378px;font-size:13px;color:#444">F</div>
<div class="t" style="left:1276.5px;width:40px;text-align:center;top:378px;font-size:13px;color:#444">G</div>
<div class="t" style="left:1370.5px;width:40px;text-align:center;top:378px;font-size:13px;color:#444">H</div>
<div class="t" style="left:1500.0px;width:40px;text-align:center;top:378px;font-size:13px;color:#444">I</div>
<div class="t" style="left:1615.5px;width:40px;text-align:center;top:378px;font-size:13px;color:#444">J</div>
<div class="t" style="left:1695.0px;width:40px;text-align:center;top:378px;font-size:13px;color:#444">K</div>
<div class="t" style="left:1760.0px;width:40px;text-align:center;top:378px;font-size:13px;color:#444">L</div>
<svg class="abs" style="left:649px;top:379px" width="12" height="12" viewBox="0 0 12 12"><path d="M11 1 V11 H1 Z" fill="#dcdcdc"/></svg>
<svg class="abs" style="left:637px;top:114px" width="1216" height="876"><path d="M148.5 262 V279" stroke="#dadada" stroke-width="1"/><path d="M270.5 262 V279" stroke="#dadada" stroke-width="1"/><path d="M328.5 262 V279" stroke="#dadada" stroke-width="1"/><path d="M414.5 262 V279" stroke="#dadada" stroke-width="1"/><path d="M544.5 262 V279" stroke="#dadada" stroke-width="1"/><path d="M630.5 262 V279" stroke="#dadada" stroke-width="1"/><path d="M689.5 262 V279" stroke="#dadada" stroke-width="1"/><path d="M818.5 262 V279" stroke="#dadada" stroke-width="1"/><path d="M948.5 262 V279" stroke="#dadada" stroke-width="1"/><path d="M1049.5 262 V279" stroke="#dadada" stroke-width="1"/><path d="M1107.5 262 V279" stroke="#dadada" stroke-width="1"/><path d="M1179.5 262 V279" stroke="#dadada" stroke-width="1"/><path d="M148.5 279 V822" stroke="#e1e1e1" stroke-width="1"/><path d="M270.5 279 V822" stroke="#e1e1e1" stroke-width="1"/><path d="M328.5 279 V822" stroke="#e1e1e1" stroke-width="1"/><path d="M414.5 279 V822" stroke="#e1e1e1" stroke-width="1"/><path d="M544.5 279 V822" stroke="#e1e1e1" stroke-width="1"/><path d="M630.5 279 V822" stroke="#e1e1e1" stroke-width="1"/><path d="M689.5 279 V822" stroke="#e1e1e1" stroke-width="1"/><path d="M818.5 310 V822" stroke="#e1e1e1" stroke-width="1"/><path d="M948.5 310 V822" stroke="#e1e1e1" stroke-width="1"/><path d="M1049.5 310 V822" stroke="#e1e1e1" stroke-width="1"/><path d="M1107.5 310 V822" stroke="#e1e1e1" stroke-width="1"/><path d="M1179.5 310 V822" stroke="#e1e1e1" stroke-width="1"/><path d="M12 310.5 H1193" stroke="#e1e1e1" stroke-width="1"/><path d="M12 329.5 H1193" stroke="#e1e1e1" stroke-width="1"/><path d="M12 348.5 H1193" stroke="#e1e1e1" stroke-width="1"/><path d="M12 367.5 H1193" stroke="#e1e1e1" stroke-width="1"/><path d="M12 386.5 H1193" stroke="#e1e1e1" stroke-width="1"/><path d="M12 405.5 H1193" stroke="#e1e1e1" stroke-width="1"/><path d="M12 424.5 H1193" stroke="#e1e1e1" stroke-width="1"/><path d="M12 443.5 H1193" stroke="#e1e1e1" stroke-width="1"/><path d="M12 462.5 H1193" stroke="#e1e1e1" stroke-width="1"/><path d="M12 481.5 H1193" stroke="#e1e1e1" stroke-width="1"/><path d="M12 500.5 H1193" stroke="#e1e1e1" stroke-width="1"/><path d="M12 519.5 H1193" stroke="#e1e1e1" stroke-width="1"/><path d="M12 538.5 H1193" stroke="#e1e1e1" stroke-width="1"/><path d="M12 557.5 H1193" stroke="#e1e1e1" stroke-width="1"/><path d="M12 576.5 H1193" stroke="#e1e1e1" stroke-width="1"/><path d="M12 595.5 H1193" stroke="#e1e1e1" stroke-width="1"/><path d="M12 614.5 H1193" stroke="#e1e1e1" stroke-width="1"/><path d="M12 633.5 H1193" stroke="#e1e1e1" stroke-width="1"/><path d="M12 652.5 H1193" stroke="#e1e1e1" stroke-width="1"/><path d="M12 671.5 H1193" stroke="#e1e1e1" stroke-width="1"/><path d="M12 690.5 H1193" stroke="#e1e1e1" stroke-width="1"/><path d="M12 709.5 H1193" stroke="#e1e1e1" stroke-width="1"/><path d="M12 728.5 H1193" stroke="#e1e1e1" stroke-width="1"/><path d="M12 747.5 H1193" stroke="#e1e1e1" stroke-width="1"/><path d="M12 766.5 H1193" stroke="#e1e1e1" stroke-width="1"/><path d="M12 785.5 H1193" stroke="#e1e1e1" stroke-width="1"/><path d="M12 804.5 H1193" stroke="#e1e1e1" stroke-width="1"/><path d="M12 823.5 H1193" stroke="#e1e1e1" stroke-width="1"/><path d="M26.5 262 V822" stroke="#c4c4c4" stroke-width="1"/><path d="M12 279.5 H1193" stroke="#c4c4c4" stroke-width="1"/></svg>
<div class="t" style="left:637px;width:26px;text-align:center;top:408.5px;font-size:13px;color:#444">1</div>
<div class="t" style="left:637px;width:26px;text-align:center;top:427.5px;font-size:13px;color:#444">2</div>
<div class="t" style="left:637px;width:26px;text-align:center;top:446.5px;font-size:13px;color:#444">3</div>
<div class="t" style="left:637px;width:26px;text-align:center;top:465.5px;font-size:13px;color:#444">4</div>
<div class="t" style="left:637px;width:26px;text-align:center;top:484.5px;font-size:13px;color:#444">5</div>
<div class="t" style="left:637px;width:26px;text-align:center;top:503.5px;font-size:13px;color:#444">6</div>
<div class="t" style="left:637px;width:26px;text-align:center;top:522.5px;font-size:13px;color:#444">7</div>
<div class="t" style="left:637px;width:26px;text-align:center;top:541.5px;font-size:13px;color:#444">8</div>
<div class="t" style="left:637px;width:26px;text-align:center;top:560.5px;font-size:13px;color:#444">9</div>
<div class="t" style="left:637px;width:26px;text-align:center;top:579.5px;font-size:13px;color:#444">10</div>
<div class="t" style="left:637px;width:26px;text-align:center;top:598.5px;font-size:13px;color:#444">11</div>
<div class="t" style="left:637px;width:26px;text-align:center;top:617.5px;font-size:13px;color:#444">12</div>
<div class="t" style="left:637px;width:26px;text-align:center;top:636.5px;font-size:13px;color:#444">13</div>
<div class="t" style="left:637px;width:26px;text-align:center;top:655.5px;font-size:13px;color:#444">14</div>
<div class="t" style="left:637px;width:26px;text-align:center;top:674.5px;font-size:13px;color:#444">15</div>
<div class="t" style="left:637px;width:26px;text-align:center;top:693.5px;font-size:13px;color:#444">16</div>
<div class="t" style="left:637px;width:26px;text-align:center;top:712.5px;font-size:13px;color:#444">17</div>
<div class="t" style="left:637px;width:26px;text-align:center;top:731.5px;font-size:13px;color:#444">18</div>
<div class="t" style="left:637px;width:26px;text-align:center;top:750.5px;font-size:13px;color:#444">19</div>
<div class="t" style="left:637px;width:26px;text-align:center;top:769.5px;font-size:13px;color:#444">20</div>
<div class="t" style="left:637px;width:26px;text-align:center;top:788.5px;font-size:13px;color:#444">21</div>
<div class="t" style="left:637px;width:26px;text-align:center;top:807.5px;font-size:13px;color:#444">22</div>
<div class="t" style="left:637px;width:26px;text-align:center;top:826.5px;font-size:13px;color:#444">23</div>
<div class="t" style="left:637px;width:26px;text-align:center;top:845.5px;font-size:13px;color:#444">24</div>
<div class="t" style="left:637px;width:26px;text-align:center;top:864.5px;font-size:13px;color:#444">25</div>
<div class="t" style="left:637px;width:26px;text-align:center;top:883.5px;font-size:13px;color:#444">26</div>
<div class="t" style="left:637px;width:26px;text-align:center;top:902.5px;font-size:13px;color:#444">27</div>
<div class="t" style="left:637px;width:26px;text-align:center;top:921.5px;font-size:13px;color:#444">28</div>
<svg class="abs" style="left:664px;top:394px" width="122" height="31" viewBox="0 0 122 31"><g fill="none" stroke="#2e2c22" stroke-width="4.3">

<path d="M43.4 2.1 H28 V20.9 H43.4 M28 11.5 H42"/>
<path d="M67.5 6 C66 3.3 63.5 2.1 59.2 2.1 C53.5 2.1 51.2 6.5 51.2 11.5 C51.2 16.5 53.5 20.9 59.2 20.9 C65 20.9 67.2 17.5 67.2 13 H59.5"/>
<path d="M92.8 6 C91.3 3.3 88.8 2.1 84.5 2.1 C78.8 2.1 76.5 6.5 76.5 11.5 C76.5 16.5 78.8 20.9 84.5 20.9 C90.3 20.9 92.5 17.5 92.5 13 H84.8"/>

</g><rect x="1" y="26.6" width="18" height="3.2" fill="#2e2c22"/><path d="M0 0 H4.8 L9.9 16.5 L15 0 H19.8 L12.2 23 H7.6 Z M99.3 23 H104 L110 6.5 L116 23 H120.7 L112.3 0 H107.7 Z" fill="#2e2c22"/></svg>
<div class="t" style="left:1599px;top:399px;font-size:20.6px;font-weight:bold;color:#111">Historial de sectores</div>
<div class="t" style="left:663px;top:446px;width:122px;height:16px;overflow:hidden;text-align:left;font-size:13px;color:#111;font-weight:bold;padding:0 2px 0 2.5px;line-height:15px">Desde</div>
<div class="t" style="left:785px;top:446px;width:122px;height:16px;overflow:hidden;text-align:left;font-size:13px;color:#111;font-weight:bold;padding:0 2px 0 2.5px;line-height:15px">Hasta</div>
<div class="t" style="left:907px;top:446px;width:58px;height:16px;overflow:hidden;text-align:left;font-size:13px;color:#111;font-weight:bold;padding:0 2px 0 2.5px;line-height:15px">Equipo</div>
<div class="t" style="left:965px;top:446px;width:86px;height:16px;overflow:hidden;text-align:left;font-size:13px;color:#111;font-weight:bold;padding:0 2px 0 2.5px;line-height:15px">Número de sensor</div>
<div class="t" style="left:1051px;top:446px;width:130px;height:16px;overflow:hidden;text-align:left;font-size:13px;color:#111;font-weight:bold;padding:0 2px 0 2.5px;line-height:15px">Nombre de equipo</div>
<div class="t" style="left:1181px;top:446px;width:86px;height:16px;overflow:hidden;text-align:left;font-size:13px;color:#111;font-weight:bold;padding:0 2px 0 2.5px;line-height:15px">Tipo de equipo</div>
<div class="t" style="left:1267px;top:446px;width:59px;height:16px;overflow:hidden;text-align:left;font-size:13px;color:#111;font-weight:bold;padding:0 2px 0 2.5px;line-height:15px">Sector</div>
<div class="t" style="left:1326px;top:446px;width:129px;height:16px;overflow:hidden;text-align:left;font-size:13px;color:#111;font-weight:bold;padding:0 2px 0 2.5px;line-height:15px">Nombre del sector</div>
<div class="t" style="left:1455px;top:446px;width:130px;height:16px;overflow:hidden;text-align:left;font-size:13px;color:#111;font-weight:bold;padding:0 2px 0 2.5px;line-height:15px">Tiempo (hh:mm:ss)</div>
<div class="t" style="left:1585px;top:446px;width:101px;height:16px;overflow:hidden;text-align:left;font-size:13px;color:#111;font-weight:bold;padding:0 2px 0 2.5px;line-height:15px">Volumen (m3)</div>
<div class="t" style="left:1686px;top:446px;width:58px;height:16px;overflow:hidden;text-align:left;font-size:13px;color:#111;font-weight:bold;padding:0 2px 0 2.5px;line-height:15px">Fer.1</div>
<div class="t" style="left:1744px;top:446px;width:72px;height:16px;overflow:hidden;text-align:left;font-size:13px;color:#111;font-weight:bold;padding:0 2px 0 2.5px;line-height:15px">Fer.1 (L)</div>
<div class="t" style="left:1816px;top:446px;width:14px;height:16px;overflow:hidden;text-align:left;font-size:13px;color:#111;font-weight:bold;padding:0 2px 0 2.5px;line-height:15px">Fer.2</div>
<div class="t" style="left:663px;top:465px;width:122px;height:16px;overflow:hidden;text-align:right;font-size:13px;color:#111;padding:0 2px 0 2.5px;line-height:15px">07/01/2025 14:50</div>
<div class="t" style="left:785px;top:465px;width:122px;height:16px;overflow:hidden;text-align:right;font-size:13px;color:#111;padding:0 2px 0 2.5px;line-height:15px">07/01/2025 15:00</div>
<div class="t" style="left:907px;top:465px;width:58px;height:16px;overflow:hidden;text-align:right;font-size:13px;color:#111;padding:0 2px 0 2.5px;line-height:15px">10431</div>
<div class="t" style="left:965px;top:465px;width:86px;height:16px;overflow:hidden;text-align:right;font-size:13px;color:#111;padding:0 2px 0 2.5px;line-height:15px">29981</div>
<div class="t" style="left:1051px;top:465px;width:130px;height:16px;overflow:hidden;text-align:left;font-size:13px;color:#111;padding:0 2px 0 2.5px;line-height:15px">VIVARES</div>
<div class="t" style="left:1181px;top:465px;width:86px;height:16px;overflow:hidden;text-align:left;font-size:13px;color:#111;padding:0 2px 0 2.5px;line-height:15px">A2500</div>
<div class="t" style="left:1267px;top:465px;width:59px;height:16px;overflow:hidden;text-align:right;font-size:13px;color:#111;padding:0 2px 0 2.5px;line-height:15px">1</div>
<div class="t" style="left:1326px;top:465px;width:129px;height:16px;overflow:hidden;text-align:left;font-size:13px;color:#111;padding:0 2px 0 2.5px;line-height:15px">1</div>
<div class="t" style="left:1455px;top:465px;width:130px;height:16px;overflow:hidden;text-align:left;font-size:13px;color:#111;padding:0 2px 0 2.5px;line-height:15px">00:00:57</div>
<div class="t" style="left:1585px;top:465px;width:101px;height:16px;overflow:hidden;text-align:right;font-size:13px;color:#111;padding:0 2px 0 2.5px;line-height:15px">0</div>
<div class="t" style="left:1686px;top:465px;width:58px;height:16px;overflow:hidden;text-align:left;font-size:13px;color:#111;padding:0 2px 0 2.5px;line-height:15px">00:00:00</div>
<div class="t" style="left:1744px;top:465px;width:72px;height:16px;overflow:hidden;text-align:right;font-size:13px;color:#111;padding:0 2px 0 2.5px;line-height:15px">0</div>
<div class="t" style="left:1816px;top:465px;width:14px;height:16px;overflow:hidden;text-align:left;font-size:13px;color:#111;padding:0 2px 0 2.5px;line-height:15px">00:00:00</div>
<svg class="abs" style="left:1326px;top:463px" width="6" height="6" viewBox="0 0 6 6"><path d="M0 0 H6 L0 6 Z" fill="#1e7e34"/></svg>
<div class="t" style="left:663px;top:484px;width:122px;height:16px;overflow:hidden;text-align:right;font-size:13px;color:#111;padding:0 2px 0 2.5px;line-height:15px">07/01/2025 14:50</div>
<div class="t" style="left:785px;top:484px;width:122px;height:16px;overflow:hidden;text-align:right;font-size:13px;color:#111;padding:0 2px 0 2.5px;line-height:15px">07/01/2025 15:00</div>
<div class="t" style="left:907px;top:484px;width:58px;height:16px;overflow:hidden;text-align:right;font-size:13px;color:#111;padding:0 2px 0 2.5px;line-height:15px">10431</div>
<div class="t" style="left:965px;top:484px;width:86px;height:16px;overflow:hidden;text-align:right;font-size:13px;color:#111;padding:0 2px 0 2.5px;line-height:15px">29981</div>
<div class="t" style="left:1051px;top:484px;width:130px;height:16px;overflow:hidden;text-align:left;font-size:13px;color:#111;padding:0 2px 0 2.5px;line-height:15px">VIVARES</div>
<div class="t" style="left:1181px;top:484px;width:86px;height:16px;overflow:hidden;text-align:left;font-size:13px;color:#111;padding:0 2px 0 2.5px;line-height:15px">A2500</div>
<div class="t" style="left:1267px;top:484px;width:59px;height:16px;overflow:hidden;text-align:right;font-size:13px;color:#111;padding:0 2px 0 2.5px;line-height:15px">2</div>
<div class="t" style="left:1326px;top:484px;width:129px;height:16px;overflow:hidden;text-align:left;font-size:13px;color:#111;padding:0 2px 0 2.5px;line-height:15px">2</div>
<div class="t" style="left:1455px;top:484px;width:130px;height:16px;overflow:hidden;text-align:left;font-size:13px;color:#111;padding:0 2px 0 2.5px;line-height:15px">00:00:57</div>
<div class="t" style="left:1585px;top:484px;width:101px;height:16px;overflow:hidden;text-align:right;font-size:13px;color:#111;padding:0 2px 0 2.5px;line-height:15px">0</div>
<div class="t" style="left:1686px;top:484px;width:58px;height:16px;overflow:hidden;text-align:left;font-size:13px;color:#111;padding:0 2px 0 2.5px;line-height:15px">00:00:00</div>
<div class="t" style="left:1744px;top:484px;width:72px;height:16px;overflow:hidden;text-align:right;font-size:13px;color:#111;padding:0 2px 0 2.5px;line-height:15px">0</div>
<div class="t" style="left:1816px;top:484px;width:14px;height:16px;overflow:hidden;text-align:left;font-size:13px;color:#111;padding:0 2px 0 2.5px;line-height:15px">00:00:00</div>
<svg class="abs" style="left:1326px;top:482px" width="6" height="6" viewBox="0 0 6 6"><path d="M0 0 H6 L0 6 Z" fill="#1e7e34"/></svg>
<div class="t" style="left:663px;top:503px;width:122px;height:16px;overflow:hidden;text-align:right;font-size:13px;color:#111;padding:0 2px 0 2.5px;line-height:15px">07/01/2025 14:50</div>
<div class="t" style="left:785px;top:503px;width:122px;height:16px;overflow:hidden;text-align:right;font-size:13px;color:#111;padding:0 2px 0 2.5px;line-height:15px">07/01/2025 15:00</div>
<div class="t" style="left:907px;top:503px;width:58px;height:16px;overflow:hidden;text-align:right;font-size:13px;color:#111;padding:0 2px 0 2.5px;line-height:15px">10431</div>
<div class="t" style="left:965px;top:503px;width:86px;height:16px;overflow:hidden;text-align:right;font-size:13px;color:#111;padding:0 2px 0 2.5px;line-height:15px">29981</div>
<div class="t" style="left:1051px;top:503px;width:130px;height:16px;overflow:hidden;text-align:left;font-size:13px;color:#111;padding:0 2px 0 2.5px;line-height:15px">VIVARES</div>
<div class="t" style="left:1181px;top:503px;width:86px;height:16px;overflow:hidden;text-align:left;font-size:13px;color:#111;padding:0 2px 0 2.5px;line-height:15px">A2500</div>
<div class="t" style="left:1267px;top:503px;width:59px;height:16px;overflow:hidden;text-align:right;font-size:13px;color:#111;padding:0 2px 0 2.5px;line-height:15px">3</div>
<div class="t" style="left:1326px;top:503px;width:129px;height:16px;overflow:hidden;text-align:left;font-size:13px;color:#111;padding:0 2px 0 2.5px;line-height:15px">3</div>
<div class="t" style="left:1455px;top:503px;width:130px;height:16px;overflow:hidden;text-align:left;font-size:13px;color:#111;padding:0 2px 0 2.5px;line-height:15px">00:00:57</div>
<div class="t" style="left:1585px;top:503px;width:101px;height:16px;overflow:hidden;text-align:right;font-size:13px;color:#111;padding:0 2px 0 2.5px;line-height:15px">0</div>
<div class="t" style="left:1686px;top:503px;width:58px;height:16px;overflow:hidden;text-align:left;font-size:13px;color:#111;padding:0 2px 0 2.5px;line-height:15px">00:00:00</div>
<div class="t" style="left:1744px;top:503px;width:72px;height:16px;overflow:hidden;text-align:right;font-size:13px;color:#111;padding:0 2px 0 2.5px;line-height:15px">0</div>
<div class="t" style="left:1816px;top:503px;width:14px;height:16px;overflow:hidden;text-align:left;font-size:13px;color:#111;padding:0 2px 0 2.5px;line-height:15px">00:00:00</div>
<svg class="abs" style="left:1326px;top:501px" width="6" height="6" viewBox="0 0 6 6"><path d="M0 0 H6 L0 6 Z" fill="#1e7e34"/></svg>
<div class="t" style="left:663px;top:522px;width:122px;height:16px;overflow:hidden;text-align:right;font-size:13px;color:#111;padding:0 2px 0 2.5px;line-height:15px">07/01/2025 14:50</div>
<div class="t" style="left:785px;top:522px;width:122px;height:16px;overflow:hidden;text-align:right;font-size:13px;color:#111;padding:0 2px 0 2.5px;line-height:15px">07/01/2025 15:00</div>
<div class="t" style="left:907px;top:522px;width:58px;height:16px;overflow:hidden;text-align:right;font-size:13px;color:#111;padding:0 2px 0 2.5px;line-height:15px">10431</div>
<div class="t" style="left:965px;top:522px;width:86px;height:16px;overflow:hidden;text-align:right;font-size:13px;color:#111;padding:0 2px 0 2.5px;line-height:15px">29981</div>
<div class="t" style="left:1051px;top:522px;width:130px;height:16px;overflow:hidden;text-align:left;font-size:13px;color:#111;padding:0 2px 0 2.5px;line-height:15px">VIVARES</div>
<div class="t" style="left:1181px;top:522px;width:86px;height:16px;overflow:hidden;text-align:left;font-size:13px;color:#111;padding:0 2px 0 2.5px;line-height:15px">A2500</div>
<div class="t" style="left:1267px;top:522px;width:59px;height:16px;overflow:hidden;text-align:right;font-size:13px;color:#111;padding:0 2px 0 2.5px;line-height:15px">11</div>
<div class="t" style="left:1326px;top:522px;width:129px;height:16px;overflow:hidden;text-align:left;font-size:13px;color:#111;padding:0 2px 0 2.5px;line-height:15px">11</div>
<div class="t" style="left:1455px;top:522px;width:130px;height:16px;overflow:hidden;text-align:left;font-size:13px;color:#111;padding:0 2px 0 2.5px;line-height:15px">00:00:57</div>
<div class="t" style="left:1585px;top:522px;width:101px;height:16px;overflow:hidden;text-align:right;font-size:13px;color:#111;padding:0 2px 0 2.5px;line-height:15px">0</div>
<div class="t" style="left:1686px;top:522px;width:58px;height:16px;overflow:hidden;text-align:left;font-size:13px;color:#111;padding:0 2px 0 2.5px;line-height:15px">00:00:00</div>
<div class="t" style="left:1744px;top:522px;width:72px;height:16px;overflow:hidden;text-align:right;font-size:13px;color:#111;padding:0 2px 0 2.5px;line-height:15px">0</div>
<div class="t" style="left:1816px;top:522px;width:14px;height:16px;overflow:hidden;text-align:left;font-size:13px;color:#111;padding:0 2px 0 2.5px;line-height:15px">00:00:00</div>
<svg class="abs" style="left:1326px;top:520px" width="6" height="6" viewBox="0 0 6 6"><path d="M0 0 H6 L0 6 Z" fill="#1e7e34"/></svg>
<div class="t" style="left:663px;top:541px;width:122px;height:16px;overflow:hidden;text-align:right;font-size:13px;color:#111;padding:0 2px 0 2.5px;line-height:15px">07/01/2025 15:10</div>
<div class="t" style="left:785px;top:541px;width:122px;height:16px;overflow:hidden;text-align:right;font-size:13px;color:#111;padding:0 2px 0 2.5px;line-height:15px">07/01/2025 15:20</div>
<div class="t" style="left:907px;top:541px;width:58px;height:16px;overflow:hidden;text-align:right;font-size:13px;color:#111;padding:0 2px 0 2.5px;line-height:15px">10431</div>
<div class="t" style="left:965px;top:541px;width:86px;height:16px;overflow:hidden;text-align:right;font-size:13px;color:#111;padding:0 2px 0 2.5px;line-height:15px">29981</div>
<div class="t" style="left:1051px;top:541px;width:130px;height:16px;overflow:hidden;text-align:left;font-size:13px;color:#111;padding:0 2px 0 2.5px;line-height:15px">VIVARES</div>
<div class="t" style="left:1181px;top:541px;width:86px;height:16px;overflow:hidden;text-align:left;font-size:13px;color:#111;padding:0 2px 0 2.5px;line-height:15px">A2500</div>
<div class="t" style="left:1267px;top:541px;width:59px;height:16px;overflow:hidden;text-align:right;font-size:13px;color:#111;padding:0 2px 0 2.5px;line-height:15px">11</div>
<div class="t" style="left:1326px;top:541px;width:129px;height:16px;overflow:hidden;text-align:left;font-size:13px;color:#111;padding:0 2px 0 2.5px;line-height:15px">11</div>
<div class="t" style="left:1455px;top:541px;width:130px;height:16px;overflow:hidden;text-align:left;font-size:13px;color:#111;padding:0 2px 0 2.5px;line-height:15px">00:00:55</div>
<div class="t" style="left:1585px;top:541px;width:101px;height:16px;overflow:hidden;text-align:right;font-size:13px;color:#111;padding:0 2px 0 2.5px;line-height:15px">0</div>
<div class="t" style="left:1686px;top:541px;width:58px;height:16px;overflow:hidden;text-align:left;font-size:13px;color:#111;padding:0 2px 0 2.5px;line-height:15px">00:00:00</div>
<div class="t" style="left:1744px;top:541px;width:72px;height:16px;overflow:hidden;text-align:right;font-size:13px;color:#111;padding:0 2px 0 2.5px;line-height:15px">0</div>
<div class="t" style="left:1816px;top:541px;width:14px;height:16px;overflow:hidden;text-align:left;font-size:13px;color:#111;padding:0 2px 0 2.5px;line-height:15px">00:00:00</div>
<svg class="abs" style="left:1326px;top:539px" width="6" height="6" viewBox="0 0 6 6"><path d="M0 0 H6 L0 6 Z" fill="#1e7e34"/></svg>
<div class="t" style="left:663px;top:560px;width:122px;height:16px;overflow:hidden;text-align:right;font-size:13px;color:#111;padding:0 2px 0 2.5px;line-height:15px">07/01/2025 15:10</div>
<div class="t" style="left:785px;top:560px;width:122px;height:16px;overflow:hidden;text-align:right;font-size:13px;color:#111;padding:0 2px 0 2.5px;line-height:15px">07/01/2025 15:20</div>
<div class="t" style="left:907px;top:560px;width:58px;height:16px;overflow:hidden;text-align:right;font-size:13px;color:#111;padding:0 2px 0 2.5px;line-height:15px">10431</div>
<div class="t" style="left:965px;top:560px;width:86px;height:16px;overflow:hidden;text-align:right;font-size:13px;color:#111;padding:0 2px 0 2.5px;line-height:15px">29981</div>
<div class="t" style="left:1051px;top:560px;width:130px;height:16px;overflow:hidden;text-align:left;font-size:13px;color:#111;padding:0 2px 0 2.5px;line-height:15px">VIVARES</div>
<div class="t" style="left:1181px;top:560px;width:86px;height:16px;overflow:hidden;text-align:left;font-size:13px;color:#111;padding:0 2px 0 2.5px;line-height:15px">A2500</div>
<div class="t" style="left:1267px;top:560px;width:59px;height:16px;overflow:hidden;text-align:right;font-size:13px;color:#111;padding:0 2px 0 2.5px;line-height:15px">3</div>
<div class="t" style="left:1326px;top:560px;width:129px;height:16px;overflow:hidden;text-align:left;font-size:13px;color:#111;padding:0 2px 0 2.5px;line-height:15px">3</div>
<div class="t" style="left:1455px;top:560px;width:130px;height:16px;overflow:hidden;text-align:left;font-size:13px;color:#111;padding:0 2px 0 2.5px;line-height:15px">00:00:55</div>
<div class="t" style="left:1585px;top:560px;width:101px;height:16px;overflow:hidden;text-align:right;font-size:13px;color:#111;padding:0 2px 0 2.5px;line-height:15px">0</div>
<div class="t" style="left:1686px;top:560px;width:58px;height:16px;overflow:hidden;text-align:left;font-size:13px;color:#111;padding:0 2px 0 2.5px;line-height:15px">00:00:00</div>
<div class="t" style="left:1744px;top:560px;width:72px;height:16px;overflow:hidden;text-align:right;font-size:13px;color:#111;padding:0 2px 0 2.5px;line-height:15px">0</div>
<div class="t" style="left:1816px;top:560px;width:14px;height:16px;overflow:hidden;text-align:left;font-size:13px;color:#111;padding:0 2px 0 2.5px;line-height:15px">00:00:00</div>
<svg class="abs" style="left:1326px;top:558px" width="6" height="6" viewBox="0 0 6 6"><path d="M0 0 H6 L0 6 Z" fill="#1e7e34"/></svg>
<div class="t" style="left:663px;top:579px;width:122px;height:16px;overflow:hidden;text-align:right;font-size:13px;color:#111;padding:0 2px 0 2.5px;line-height:15px">07/01/2025 15:10</div>
<div class="t" style="left:785px;top:579px;width:122px;height:16px;overflow:hidden;text-align:right;font-size:13px;color:#111;padding:0 2px 0 2.5px;line-height:15px">07/01/2025 15:20</div>
<div class="t" style="left:907px;top:579px;width:58px;height:16px;overflow:hidden;text-align:right;font-size:13px;color:#111;padding:0 2px 0 2.5px;line-height:15px">10431</div>
<div class="t" style="left:965px;top:579px;width:86px;height:16px;overflow:hidden;text-align:right;font-size:13px;color:#111;padding:0 2px 0 2.5px;line-height:15px">29981</div>
<div class="t" style="left:1051px;top:579px;width:130px;height:16px;overflow:hidden;text-align:left;font-size:13px;color:#111;padding:0 2px 0 2.5px;line-height:15px">VIVARES</div>
<div class="t" style="left:1181px;top:579px;width:86px;height:16px;overflow:hidden;text-align:left;font-size:13px;color:#111;padding:0 2px 0 2.5px;line-height:15px">A2500</div>
<div class="t" style="left:1267px;top:579px;width:59px;height:16px;overflow:hidden;text-align:right;font-size:13px;color:#111;padding:0 2px 0 2.5px;line-height:15px">2</div>
<div class="t" style="left:1326px;top:579px;width:129px;height:16px;overflow:hidden;text-align:left;font-size:13px;color:#111;padding:0 2px 0 2.5px;line-height:15px">2</div>
<div class="t" style="left:1455px;top:579px;width:130px;height:16px;overflow:hidden;text-align:left;font-size:13px;color:#111;padding:0 2px 0 2.5px;line-height:15px">00:00:55</div>
<div class="t" style="left:1585px;top:579px;width:101px;height:16px;overflow:hidden;text-align:right;font-size:13px;color:#111;padding:0 2px 0 2.5px;line-height:15px">0</div>
<div class="t" style="left:1686px;top:579px;width:58px;height:16px;overflow:hidden;text-align:left;font-size:13px;color:#111;padding:0 2px 0 2.5px;line-height:15px">00:00:00</div>
<div class="t" style="left:1744px;top:579px;width:72px;height:16px;overflow:hidden;text-align:right;font-size:13px;color:#111;padding:0 2px 0 2.5px;line-height:15px">0</div>
<div class="t" style="left:1816px;top:579px;width:14px;height:16px;overflow:hidden;text-align:left;font-size:13px;color:#111;padding:0 2px 0 2.5px;line-height:15px">00:00:00</div>
<svg class="abs" style="left:1326px;top:577px" width="6" height="6" viewBox="0 0 6 6"><path d="M0 0 H6 L0 6 Z" fill="#1e7e34"/></svg>
<div class="t" style="left:663px;top:598px;width:122px;height:16px;overflow:hidden;text-align:right;font-size:13px;color:#111;padding:0 2px 0 2.5px;line-height:15px">07/01/2025 15:10</div>
<div class="t" style="left:785px;top:598px;width:122px;height:16px;overflow:hidden;text-align:right;font-size:13px;color:#111;padding:0 2px 0 2.5px;line-height:15px">07/01/2025 15:20</div>
<div class="t" style="left:907px;top:598px;width:58px;height:16px;overflow:hidden;text-align:right;font-size:13px;color:#111;padding:0 2px 0 2.5px;line-height:15px">10431</div>
<div class="t" style="left:965px;top:598px;width:86px;height:16px;overflow:hidden;text-align:right;font-size:13px;color:#111;padding:0 2px 0 2.5px;line-height:15px">29981</div>
<div class="t" style="left:1051px;top:598px;width:130px;height:16px;overflow:hidden;text-align:left;font-size:13px;color:#111;padding:0 2px 0 2.5px;line-height:15px">VIVARES</div>
<div class="t" style="left:1181px;top:598px;width:86px;height:16px;overflow:hidden;text-align:left;font-size:13px;color:#111;padding:0 2px 0 2.5px;line-height:15px">A2500</div>
<div class="t" style="left:1267px;top:598px;width:59px;height:16px;overflow:hidden;text-align:right;font-size:13px;color:#111;padding:0 2px 0 2.5px;line-height:15px">1</div>
<div class="t" style="left:1326px;top:598px;width:129px;height:16px;overflow:hidden;text-align:left;font-size:13px;color:#111;padding:0 2px 0 2.5px;line-height:15px">1</div>
<div class="t" style="left:1455px;top:598px;width:130px;height:16px;overflow:hidden;text-align:left;font-size:13px;color:#111;padding:0 2px 0 2.5px;line-height:15px">00:00:55</div>
<div class="t" style="left:1585px;top:598px;width:101px;height:16px;overflow:hidden;text-align:right;font-size:13px;color:#111;padding:0 2px 0 2.5px;line-height:15px">0</div>
<div class="t" style="left:1686px;top:598px;width:58px;height:16px;overflow:hidden;text-align:left;font-size:13px;color:#111;padding:0 2px 0 2.5px;line-height:15px">00:00:00</div>
<div class="t" style="left:1744px;top:598px;width:72px;height:16px;overflow:hidden;text-align:right;font-size:13px;color:#111;padding:0 2px 0 2.5px;line-height:15px">0</div>
<div class="t" style="left:1816px;top:598px;width:14px;height:16px;overflow:hidden;text-align:left;font-size:13px;color:#111;padding:0 2px 0 2.5px;line-height:15px">00:00:00</div>
<svg class="abs" style="left:1326px;top:596px" width="6" height="6" viewBox="0 0 6 6"><path d="M0 0 H6 L0 6 Z" fill="#1e7e34"/></svg>
<div class="t" style="left:663px;top:617px;width:122px;height:16px;overflow:hidden;text-align:right;font-size:13px;color:#111;padding:0 2px 0 2.5px;line-height:15px">07/01/2025 15:20</div>
<div class="t" style="left:785px;top:617px;width:122px;height:16px;overflow:hidden;text-align:right;font-size:13px;color:#111;padding:0 2px 0 2.5px;line-height:15px">07/01/2025 15:30</div>
<div class="t" style="left:907px;top:617px;width:58px;height:16px;overflow:hidden;text-align:right;font-size:13px;color:#111;padding:0 2px 0 2.5px;line-height:15px">10431</div>
<div class="t" style="left:965px;top:617px;width:86px;height:16px;overflow:hidden;text-align:right;font-size:13px;color:#111;padding:0 2px 0 2.5px;line-height:15px">29981</div>
<div class="t" style="left:1051px;top:617px;width:130px;height:16px;overflow:hidden;text-align:left;font-size:13px;color:#111;padding:0 2px 0 2.5px;line-height:15px">VIVARES</div>
<div class="t" style="left:1181px;top:617px;width:86px;height:16px;overflow:hidden;text-align:left;font-size:13px;color:#111;padding:0 2px 0 2.5px;line-height:15px">A2500</div>
<div class="t" style="left:1267px;top:617px;width:59px;height:16px;overflow:hidden;text-align:right;font-size:13px;color:#111;padding:0 2px 0 2.5px;line-height:15px">1</div>
<div class="t" style="left:1326px;top:617px;width:129px;height:16px;overflow:hidden;text-align:left;font-size:13px;color:#111;padding:0 2px 0 2.5px;line-height:15px">1</div>
<div class="t" style="left:1455px;top:617px;width:130px;height:16px;overflow:hidden;text-align:left;font-size:13px;color:#111;padding:0 2px 0 2.5px;line-height:15px">00:10:00</div>
<div class="t" style="left:1585px;top:617px;width:101px;height:16px;overflow:hidden;text-align:right;font-size:13px;color:#111;padding:0 2px 0 2.5px;line-height:15px">6,13</div>
<div class="t" style="left:1686px;top:617px;width:58px;height:16px;overflow:hidden;text-align:left;font-size:13px;color:#111;padding:0 2px 0 2.5px;line-height:15px">00:00:00</div>
<div class="t" style="left:1744px;top:617px;width:72px;height:16px;overflow:hidden;text-align:right;font-size:13px;color:#111;padding:0 2px 0 2.5px;line-height:15px">0</div>
<div class="t" style="left:1816px;top:617px;width:14px;height:16px;overflow:hidden;text-align:left;font-size:13px;color:#111;padding:0 2px 0 2.5px;line-height:15px">00:00:00</div>
<svg class="abs" style="left:1326px;top:615px" width="6" height="6" viewBox="0 0 6 6"><path d="M0 0 H6 L0 6 Z" fill="#1e7e34"/></svg>
<div class="t" style="left:663px;top:636px;width:122px;height:16px;overflow:hidden;text-align:right;font-size:13px;color:#111;padding:0 2px 0 2.5px;line-height:15px">07/01/2025 15:20</div>
<div class="t" style="left:785px;top:636px;width:122px;height:16px;overflow:hidden;text-align:right;font-size:13px;color:#111;padding:0 2px 0 2.5px;line-height:15px">07/01/2025 15:30</div>
<div class="t" style="left:907px;top:636px;width:58px;height:16px;overflow:hidden;text-align:right;font-size:13px;color:#111;padding:0 2px 0 2.5px;line-height:15px">10431</div>
<div class="t" style="left:965px;top:636px;width:86px;height:16px;overflow:hidden;text-align:right;font-size:13px;color:#111;padding:0 2px 0 2.5px;line-height:15px">29981</div>
<div class="t" style="left:1051px;top:636px;width:130px;height:16px;overflow:hidden;text-align:left;font-size:13px;color:#111;padding:0 2px 0 2.5px;line-height:15px">VIVARES</div>
<div class="t" style="left:1181px;top:636px;width:86px;height:16px;overflow:hidden;text-align:left;font-size:13px;color:#111;padding:0 2px 0 2.5px;line-height:15px">A2500</div>
<div class="t" style="left:1267px;top:636px;width:59px;height:16px;overflow:hidden;text-align:right;font-size:13px;color:#111;padding:0 2px 0 2.5px;line-height:15px">2</div>
<div class="t" style="left:1326px;top:636px;width:129px;height:16px;overflow:hidden;text-align:left;font-size:13px;color:#111;padding:0 2px 0 2.5px;line-height:15px">2</div>
<div class="t" style="left:1455px;top:636px;width:130px;height:16px;overflow:hidden;text-align:left;font-size:13px;color:#111;padding:0 2px 0 2.5px;line-height:15px">00:10:00</div>
<div class="t" style="left:1585px;top:636px;width:101px;height:16px;overflow:hidden;text-align:right;font-size:13px;color:#111;padding:0 2px 0 2.5px;line-height:15px">5,52</div>
<div class="t" style="left:1686px;top:636px;width:58px;height:16px;overflow:hidden;text-align:left;font-size:13px;color:#111;padding:0 2px 0 2.5px;line-height:15px">00:00:00</div>
<div class="t" style="left:1744px;top:636px;width:72px;height:16px;overflow:hidden;text-align:right;font-size:13px;color:#111;padding:0 2px 0 2.5px;line-height:15px">0</div>
<div class="t" style="left:1816px;top:636px;width:14px;height:16px;overflow:hidden;text-align:left;font-size:13px;color:#111;padding:0 2px 0 2.5px;line-height:15px">00:00:00</div>
<svg class="abs" style="left:1326px;top:634px" width="6" height="6" viewBox="0 0 6 6"><path d="M0 0 H6 L0 6 Z" fill="#1e7e34"/></svg>
<div class="t" style="left:663px;top:655px;width:122px;height:16px;overflow:hidden;text-align:right;font-size:13px;color:#111;padding:0 2px 0 2.5px;line-height:15px">07/01/2025 15:20</div>
<div class="t" style="left:785px;top:655px;width:122px;height:16px;overflow:hidden;text-align:right;font-size:13px;color:#111;padding:0 2px 0 2.5px;line-height:15px">07/01/2025 15:30</div>
<div class="t" style="left:907px;top:655px;width:58px;height:16px;overflow:hidden;text-align:right;font-size:13px;color:#111;padding:0 2px 0 2.5px;line-height:15px">10431</div>
<div class="t" style="left:965px;top:655px;width:86px;height:16px;overflow:hidden;text-align:right;font-size:13px;color:#111;padding:0 2px 0 2.5px;line-height:15px">29981</div>
<div class="t" style="left:1051px;top:655px;width:130px;height:16px;overflow:hidden;text-align:left;font-size:13px;color:#111;padding:0 2px 0 2.5px;line-height:15px">VIVARES</div>
<div class="t" style="left:1181px;top:655px;width:86px;height:16px;overflow:hidden;text-align:left;font-size:13px;color:#111;padding:0 2px 0 2.5px;line-height:15px">A2500</div>
<div class="t" style="left:1267px;top:655px;width:59px;height:16px;overflow:hidden;text-align:right;font-size:13px;color:#111;padding:0 2px 0 2.5px;line-height:15px">3</div>
<div class="t" style="left:1326px;top:655px;width:129px;height:16px;overflow:hidden;text-align:left;font-size:13px;color:#111;padding:0 2px 0 2.5px;line-height:15px">3</div>
<div class="t" style="left:1455px;top:655px;width:130px;height:16px;overflow:hidden;text-align:left;font-size:13px;color:#111;padding:0 2px 0 2.5px;line-height:15px">00:10:00</div>
<div class="t" style="left:1585px;top:655px;width:101px;height:16px;overflow:hidden;text-align:right;font-size:13px;color:#111;padding:0 2px 0 2.5px;line-height:15px">5</div>
<div class="t" style="left:1686px;top:655px;width:58px;height:16px;overflow:hidden;text-align:left;font-size:13px;color:#111;padding:0 2px 0 2.5px;line-height:15px">00:00:00</div>
<div class="t" style="left:1744px;top:655px;width:72px;height:16px;overflow:hidden;text-align:right;font-size:13px;color:#111;padding:0 2px 0 2.5px;line-height:15px">0</div>
<div class="t" style="left:1816px;top:655px;width:14px;height:16px;overflow:hidden;text-align:left;font-size:13px;color:#111;padding:0 2px 0 2.5px;line-height:15px">00:00:00</div>
<svg class="abs" style="left:1326px;top:653px" width="6" height="6" viewBox="0 0 6 6"><path d="M0 0 H6 L0 6 Z" fill="#1e7e34"/></svg>
<div class="t" style="left:663px;top:674px;width:122px;height:16px;overflow:hidden;text-align:right;font-size:13px;color:#111;padding:0 2px 0 2.5px;line-height:15px">07/01/2025 15:20</div>
<div class="t" style="left:785px;top:674px;width:122px;height:16px;overflow:hidden;text-align:right;font-size:13px;color:#111;padding:0 2px 0 2.5px;line-height:15px">07/01/2025 15:30</div>
<div class="t" style="left:907px;top:674px;width:58px;height:16px;overflow:hidden;text-align:right;font-size:13px;color:#111;padding:0 2px 0 2.5px;line-height:15px">10431</div>
<div class="t" style="left:965px;top:674px;width:86px;height:16px;overflow:hidden;text-align:right;font-size:13px;color:#111;padding:0 2px 0 2.5px;line-height:15px">29981</div>
<div class="t" style="left:1051px;top:674px;width:130px;height:16px;overflow:hidden;text-align:left;font-size:13px;color:#111;padding:0 2px 0 2.5px;line-height:15px">VIVARES</div>
<div class="t" style="left:1181px;top:674px;width:86px;height:16px;overflow:hidden;text-align:left;font-size:13px;color:#111;padding:0 2px 0 2.5px;line-height:15px">A2500</div>
<div class="t" style="left:1267px;top:674px;width:59px;height:16px;overflow:hidden;text-align:right;font-size:13px;color:#111;padding:0 2px 0 2.5px;line-height:15px">11</div>
<div class="t" style="left:1326px;top:674px;width:129px;height:16px;overflow:hidden;text-align:left;font-size:13px;color:#111;padding:0 2px 0 2.5px;line-height:15px">11</div>
<div class="t" style="left:1455px;top:674px;width:130px;height:16px;overflow:hidden;text-align:left;font-size:13px;color:#111;padding:0 2px 0 2.5px;line-height:15px">00:10:00</div>
<div class="t" style="left:1585px;top:674px;width:101px;height:16px;overflow:hidden;text-align:right;font-size:13px;color:#111;padding:0 2px 0 2.5px;line-height:15px">6,35</div>
<div class="t" style="left:1686px;top:674px;width:58px;height:16px;overflow:hidden;text-align:left;font-size:13px;color:#111;padding:0 2px 0 2.5px;line-height:15px">00:00:00</div>
<div class="t" style="left:1744px;top:674px;width:72px;height:16px;overflow:hidden;text-align:right;font-size:13px;color:#111;padding:0 2px 0 2.5px;line-height:15px">0</div>
<div class="t" style="left:1816px;top:674px;width:14px;height:16px;overflow:hidden;text-align:left;font-size:13px;color:#111;padding:0 2px 0 2.5px;line-height:15px">00:00:00</div>
<svg class="abs" style="left:1326px;top:672px" width="6" height="6" viewBox="0 0 6 6"><path d="M0 0 H6 L0 6 Z" fill="#1e7e34"/></svg>
<div class="t" style="left:663px;top:693px;width:122px;height:16px;overflow:hidden;text-align:right;font-size:13px;color:#111;padding:0 2px 0 2.5px;line-height:15px">07/01/2025 15:30</div>
<div class="t" style="left:785px;top:693px;width:122px;height:16px;overflow:hidden;text-align:right;font-size:13px;color:#111;padding:0 2px 0 2.5px;line-height:15px">07/01/2025 15:40</div>
<div class="t" style="left:907px;top:693px;width:58px;height:16px;overflow:hidden;text-align:right;font-size:13px;color:#111;padding:0 2px 0 2.5px;line-height:15px">10431</div>
<div class="t" style="left:965px;top:693px;width:86px;height:16px;overflow:hidden;text-align:right;font-size:13px;color:#111;padding:0 2px 0 2.5px;line-height:15px">29981</div>
<div class="t" style="left:1051px;top:693px;width:130px;height:16px;overflow:hidden;text-align:left;font-size:13px;color:#111;padding:0 2px 0 2.5px;line-height:15px">VIVARES</div>
<div class="t" style="left:1181px;top:693px;width:86px;height:16px;overflow:hidden;text-align:left;font-size:13px;color:#111;padding:0 2px 0 2.5px;line-height:15px">A2500</div>
<div class="t" style="left:1267px;top:693px;width:59px;height:16px;overflow:hidden;text-align:right;font-size:13px;color:#111;padding:0 2px 0 2.5px;line-height:15px">11</div>
<div class="t" style="left:1326px;top:693px;width:129px;height:16px;overflow:hidden;text-align:left;font-size:13px;color:#111;padding:0 2px 0 2.5px;line-height:15px">11</div>
<div class="t" style="left:1455px;top:693px;width:130px;height:16px;overflow:hidden;text-align:left;font-size:13px;color:#111;padding:0 2px 0 2.5px;line-height:15px">00:10:00</div>
<div class="t" style="left:1585px;top:693px;width:101px;height:16px;overflow:hidden;text-align:right;font-size:13px;color:#111;padding:0 2px 0 2.5px;line-height:15px">5,52</div>
<div class="t" style="left:1686px;top:693px;width:58px;height:16px;overflow:hidden;text-align:left;font-size:13px;color:#111;padding:0 2px 0 2.5px;line-height:15px">00:00:00</div>
<div class="t" style="left:1744px;top:693px;width:72px;height:16px;overflow:hidden;text-align:right;font-size:13px;color:#111;padding:0 2px 0 2.5px;line-height:15px">0</div>
<div class="t" style="left:1816px;top:693px;width:14px;height:16px;overflow:hidden;text-align:left;font-size:13px;color:#111;padding:0 2px 0 2.5px;line-height:15px">00:00:00</div>
<svg class="abs" style="left:1326px;top:691px" width="6" height="6" viewBox="0 0 6 6"><path d="M0 0 H6 L0 6 Z" fill="#1e7e34"/></svg>
<div class="t" style="left:663px;top:712px;width:122px;height:16px;overflow:hidden;text-align:right;font-size:13px;color:#111;padding:0 2px 0 2.5px;line-height:15px">07/01/2025 15:30</div>
<div class="t" style="left:785px;top:712px;width:122px;height:16px;overflow:hidden;text-align:right;font-size:13px;color:#111;padding:0 2px 0 2.5px;line-height:15px">07/01/2025 15:40</div>
<div class="t" style="left:907px;top:712px;width:58px;height:16px;overflow:hidden;text-align:right;font-size:13px;color:#111;padding:0 2px 0 2.5px;line-height:15px">10431</div>
<div class="t" style="left:965px;top:712px;width:86px;height:16px;overflow:hidden;text-align:right;font-size:13px;color:#111;padding:0 2px 0 2.5px;line-height:15px">29981</div>
<div class="t" style="left:1051px;top:712px;width:130px;height:16px;overflow:hidden;text-align:left;font-size:13px;color:#111;padding:0 2px 0 2.5px;line-height:15px">VIVARES</div>
<div class="t" style="left:1181px;top:712px;width:86px;height:16px;overflow:hidden;text-align:left;font-size:13px;color:#111;padding:0 2px 0 2.5px;line-height:15px">A2500</div>
<div class="t" style="left:1267px;top:712px;width:59px;height:16px;overflow:hidden;text-align:right;font-size:13px;color:#111;padding:0 2px 0 2.5px;line-height:15px">3</div>
<div class="t" style="left:1326px;top:712px;width:129px;height:16px;overflow:hidden;text-align:left;font-size:13px;color:#111;padding:0 2px 0 2.5px;line-height:15px">3</div>
<div class="t" style="left:1455px;top:712px;width:130px;height:16px;overflow:hidden;text-align:left;font-size:13px;color:#111;padding:0 2px 0 2.5px;line-height:15px">00:10:00</div>
<div class="t" style="left:1585px;top:712px;width:101px;height:16px;overflow:hidden;text-align:right;font-size:13px;color:#111;padding:0 2px 0 2.5px;line-height:15px">4,35</div>
<div class="t" style="left:1686px;top:712px;width:58px;height:16px;overflow:hidden;text-align:left;font-size:13px;color:#111;padding:0 2px 0 2.5px;line-height:15px">00:00:00</div>
<div class="t" style="left:1744px;top:712px;width:72px;height:16px;overflow:hidden;text-align:right;font-size:13px;color:#111;padding:0 2px 0 2.5px;line-height:15px">0</div>
<div class="t" style="left:1816px;top:712px;width:14px;height:16px;overflow:hidden;text-align:left;font-size:13px;color:#111;padding:0 2px 0 2.5px;line-height:15px">00:00:00</div>
<svg class="abs" style="left:1326px;top:710px" width="6" height="6" viewBox="0 0 6 6"><path d="M0 0 H6 L0 6 Z" fill="#1e7e34"/></svg>
<div class="t" style="left:663px;top:731px;width:122px;height:16px;overflow:hidden;text-align:right;font-size:13px;color:#111;padding:0 2px 0 2.5px;line-height:15px">07/01/2025 15:30</div>
<div class="t" style="left:785px;top:731px;width:122px;height:16px;overflow:hidden;text-align:right;font-size:13px;color:#111;padding:0 2px 0 2.5px;line-height:15px">07/01/2025 15:40</div>
<div class="t" style="left:907px;top:731px;width:58px;height:16px;overflow:hidden;text-align:right;font-size:13px;color:#111;padding:0 2px 0 2.5px;line-height:15px">10431</div>
<div class="t" style="left:965px;top:731px;width:86px;height:16px;overflow:hidden;text-align:right;font-size:13px;color:#111;padding:0 2px 0 2.5px;line-height:15px">29981</div>
<div class="t" style="left:1051px;top:731px;width:130px;height:16px;overflow:hidden;text-align:left;font-size:13px;color:#111;padding:0 2px 0 2.5px;line-height:15px">VIVARES</div>
<div class="t" style="left:1181px;top:731px;width:86px;height:16px;overflow:hidden;text-align:left;font-size:13px;color:#111;padding:0 2px 0 2.5px;line-height:15px">A2500</div>
<div class="t" style="left:1267px;top:731px;width:59px;height:16px;overflow:hidden;text-align:right;font-size:13px;color:#111;padding:0 2px 0 2.5px;line-height:15px">2</div>
<div class="t" style="left:1326px;top:731px;width:129px;height:16px;overflow:hidden;text-align:left;font-size:13px;color:#111;padding:0 2px 0 2.5px;line-height:15px">2</div>
<div class="t" style="left:1455px;top:731px;width:130px;height:16px;overflow:hidden;text-align:left;font-size:13px;color:#111;padding:0 2px 0 2.5px;line-height:15px">00:10:00</div>
<div class="t" style="left:1585px;top:731px;width:101px;height:16px;overflow:hidden;text-align:right;font-size:13px;color:#111;padding:0 2px 0 2.5px;line-height:15px">4,8</div>
<div class="t" style="left:1686px;top:731px;width:58px;height:16px;overflow:hidden;text-align:left;font-size:13px;color:#111;padding:0 2px 0 2.5px;line-height:15px">00:00:00</div>
<div class="t" style="left:1744px;top:731px;width:72px;height:16px;overflow:hidden;text-align:right;font-size:13px;color:#111;padding:0 2px 0 2.5px;line-height:15px">0</div>
<div class="t" style="left:1816px;top:731px;width:14px;height:16px;overflow:hidden;text-align:left;font-size:13px;color:#111;padding:0 2px 0 2.5px;line-height:15px">00:00:00</div>
<svg class="abs" style="left:1326px;top:729px" width="6" height="6" viewBox="0 0 6 6"><path d="M0 0 H6 L0 6 Z" fill="#1e7e34"/></svg>
<div class="t" style="left:663px;top:750px;width:122px;height:16px;overflow:hidden;text-align:right;font-size:13px;color:#111;padding:0 2px 0 2.5px;line-height:15px">07/01/2025 15:30</div>
<div class="t" style="left:785px;top:750px;width:122px;height:16px;overflow:hidden;text-align:right;font-size:13px;color:#111;padding:0 2px 0 2.5px;line-height:15px">07/01/2025 15:40</div>
<div class="t" style="left:907px;top:750px;width:58px;height:16px;overflow:hidden;text-align:right;font-size:13px;color:#111;padding:0 2px 0 2.5px;line-height:15px">10431</div>
<div class="t" style="left:965px;top:750px;width:86px;height:16px;overflow:hidden;text-align:right;font-size:13px;color:#111;padding:0 2px 0 2.5px;line-height:15px">29981</div>
<div class="t" style="left:1051px;top:750px;width:130px;height:16px;overflow:hidden;text-align:left;font-size:13px;color:#111;padding:0 2px 0 2.5px;line-height:15px">VIVARES</div>
<div class="t" style="left:1181px;top:750px;width:86px;height:16px;overflow:hidden;text-align:left;font-size:13px;color:#111;padding:0 2px 0 2.5px;line-height:15px">A2500</div>
<div class="t" style="left:1267px;top:750px;width:59px;height:16px;overflow:hidden;text-align:right;font-size:13px;color:#111;padding:0 2px 0 2.5px;line-height:15px">1</div>
<div class="t" style="left:1326px;top:750px;width:129px;height:16px;overflow:hidden;text-align:left;font-size:13px;color:#111;padding:0 2px 0 2.5px;line-height:15px">1</div>
<div class="t" style="left:1455px;top:750px;width:130px;height:16px;overflow:hidden;text-align:left;font-size:13px;color:#111;padding:0 2px 0 2.5px;line-height:15px">00:10:00</div>
<div class="t" style="left:1585px;top:750px;width:101px;height:16px;overflow:hidden;text-align:right;font-size:13px;color:#111;padding:0 2px 0 2.5px;line-height:15px">5,33</div>
<div class="t" style="left:1686px;top:750px;width:58px;height:16px;overflow:hidden;text-align:left;font-size:13px;color:#111;padding:0 2px 0 2.5px;line-height:15px">00:00:00</div>
<div class="t" style="left:1744px;top:750px;width:72px;height:16px;overflow:hidden;text-align:right;font-size:13px;color:#111;padding:0 2px 0 2.5px;line-height:15px">0</div>
<div class="t" style="left:1816px;top:750px;width:14px;height:16px;overflow:hidden;text-align:left;font-size:13px;color:#111;padding:0 2px 0 2.5px;line-height:15px">00:00:00</div>
<svg class="abs" style="left:1326px;top:748px" width="6" height="6" viewBox="0 0 6 6"><path d="M0 0 H6 L0 6 Z" fill="#1e7e34"/></svg>
<div class="t" style="left:663px;top:769px;width:122px;height:16px;overflow:hidden;text-align:right;font-size:13px;color:#111;padding:0 2px 0 2.5px;line-height:15px">07/01/2025 15:40</div>
<div class="t" style="left:785px;top:769px;width:122px;height:16px;overflow:hidden;text-align:right;font-size:13px;color:#111;padding:0 2px 0 2.5px;line-height:15px">07/01/2025 15:50</div>
<div class="t" style="left:907px;top:769px;width:58px;height:16px;overflow:hidden;text-align:right;font-size:13px;color:#111;padding:0 2px 0 2.5px;line-height:15px">10431</div>
<div class="t" style="left:965px;top:769px;width:86px;height:16px;overflow:hidden;text-align:right;font-size:13px;color:#111;padding:0 2px 0 2.5px;line-height:15px">29981</div>
<div class="t" style="left:1051px;top:769px;width:130px;height:16px;overflow:hidden;text-align:left;font-size:13px;color:#111;padding:0 2px 0 2.5px;line-height:15px">VIVARES</div>
<div class="t" style="left:1181px;top:769px;width:86px;height:16px;overflow:hidden;text-align:left;font-size:13px;color:#111;padding:0 2px 0 2.5px;line-height:15px">A2500</div>
<div class="t" style="left:1267px;top:769px;width:59px;height:16px;overflow:hidden;text-align:right;font-size:13px;color:#111;padding:0 2px 0 2.5px;line-height:15px">1</div>
<div class="t" style="left:1326px;top:769px;width:129px;height:16px;overflow:hidden;text-align:left;font-size:13px;color:#111;padding:0 2px 0 2.5px;line-height:15px">1</div>
<div class="t" style="left:1455px;top:769px;width:130px;height:16px;overflow:hidden;text-align:left;font-size:13px;color:#111;padding:0 2px 0 2.5px;line-height:15px">00:03:19</div>
<div class="t" style="left:1585px;top:769px;width:101px;height:16px;overflow:hidden;text-align:right;font-size:13px;color:#111;padding:0 2px 0 2.5px;line-height:15px">1,87</div>
<div class="t" style="left:1686px;top:769px;width:58px;height:16px;overflow:hidden;text-align:left;font-size:13px;color:#111;padding:0 2px 0 2.5px;line-height:15px">00:00:00</div>
<div class="t" style="left:1744px;top:769px;width:72px;height:16px;overflow:hidden;text-align:right;font-size:13px;color:#111;padding:0 2px 0 2.5px;line-height:15px">0</div>
<div class="t" style="left:1816px;top:769px;width:14px;height:16px;overflow:hidden;text-align:left;font-size:13px;color:#111;padding:0 2px 0 2.5px;line-height:15px">00:00:00</div>
<svg class="abs" style="left:1326px;top:767px" width="6" height="6" viewBox="0 0 6 6"><path d="M0 0 H6 L0 6 Z" fill="#1e7e34"/></svg>
<div class="t" style="left:663px;top:788px;width:122px;height:16px;overflow:hidden;text-align:right;font-size:13px;color:#111;padding:0 2px 0 2.5px;line-height:15px">07/01/2025 15:40</div>
<div class="t" style="left:785px;top:788px;width:122px;height:16px;overflow:hidden;text-align:right;font-size:13px;color:#111;padding:0 2px 0 2.5px;line-height:15px">07/01/2025 15:50</div>
<div class="t" style="left:907px;top:788px;width:58px;height:16px;overflow:hidden;text-align:right;font-size:13px;color:#111;padding:0 2px 0 2.5px;line-height:15px">10431</div>
<div class="t" style="left:965px;top:788px;width:86px;height:16px;overflow:hidden;text-align:right;font-size:13px;color:#111;padding:0 2px 0 2.5px;line-height:15px">29981</div>
<div class="t" style="left:1051px;top:788px;width:130px;height:16px;overflow:hidden;text-align:left;font-size:13px;color:#111;padding:0 2px 0 2.5px;line-height:15px">VIVARES</div>
<div class="t" style="left:1181px;top:788px;width:86px;height:16px;overflow:hidden;text-align:left;font-size:13px;color:#111;padding:0 2px 0 2.5px;line-height:15px">A2500</div>
<div class="t" style="left:1267px;top:788px;width:59px;height:16px;overflow:hidden;text-align:right;font-size:13px;color:#111;padding:0 2px 0 2.5px;line-height:15px">2</div>
<div class="t" style="left:1326px;top:788px;width:129px;height:16px;overflow:hidden;text-align:left;font-size:13px;color:#111;padding:0 2px 0 2.5px;line-height:15px">2</div>
<div class="t" style="left:1455px;top:788px;width:130px;height:16px;overflow:hidden;text-align:left;font-size:13px;color:#111;padding:0 2px 0 2.5px;line-height:15px">00:03:19</div>
<div class="t" style="left:1585px;top:788px;width:101px;height:16px;overflow:hidden;text-align:right;font-size:13px;color:#111;padding:0 2px 0 2.5px;line-height:15px">1,68</div>
<div class="t" style="left:1686px;top:788px;width:58px;height:16px;overflow:hidden;text-align:left;font-size:13px;color:#111;padding:0 2px 0 2.5px;line-height:15px">00:00:00</div>
<div class="t" style="left:1744px;top:788px;width:72px;height:16px;overflow:hidden;text-align:right;font-size:13px;color:#111;padding:0 2px 0 2.5px;line-height:15px">0</div>
<div class="t" style="left:1816px;top:788px;width:14px;height:16px;overflow:hidden;text-align:left;font-size:13px;color:#111;padding:0 2px 0 2.5px;line-height:15px">00:00:00</div>
<svg class="abs" style="left:1326px;top:786px" width="6" height="6" viewBox="0 0 6 6"><path d="M0 0 H6 L0 6 Z" fill="#1e7e34"/></svg>
<div class="t" style="left:663px;top:807px;width:122px;height:16px;overflow:hidden;text-align:right;font-size:13px;color:#111;padding:0 2px 0 2.5px;line-height:15px">07/01/2025 15:40</div>
<div class="t" style="left:785px;top:807px;width:122px;height:16px;overflow:hidden;text-align:right;font-size:13px;color:#111;padding:0 2px 0 2.5px;line-height:15px">07/01/2025 15:50</div>
<div class="t" style="left:907px;top:807px;width:58px;height:16px;overflow:hidden;text-align:right;font-size:13px;color:#111;padding:0 2px 0 2.5px;line-height:15px">10431</div>
<div class="t" style="left:965px;top:807px;width:86px;height:16px;overflow:hidden;text-align:right;font-size:13px;color:#111;padding:0 2px 0 2.5px;line-height:15px">29981</div>
<div class="t" style="left:1051px;top:807px;width:130px;height:16px;overflow:hidden;text-align:left;font-size:13px;color:#111;padding:0 2px 0 2.5px;line-height:15px">VIVARES</div>
<div class="t" style="left:1181px;top:807px;width:86px;height:16px;overflow:hidden;text-align:left;font-size:13px;color:#111;padding:0 2px 0 2.5px;line-height:15px">A2500</div>
<div class="t" style="left:1267px;top:807px;width:59px;height:16px;overflow:hidden;text-align:right;font-size:13px;color:#111;padding:0 2px 0 2.5px;line-height:15px">3</div>
<div class="t" style="left:1326px;top:807px;width:129px;height:16px;overflow:hidden;text-align:left;font-size:13px;color:#111;padding:0 2px 0 2.5px;line-height:15px">3</div>
<div class="t" style="left:1455px;top:807px;width:130px;height:16px;overflow:hidden;text-align:left;font-size:13px;color:#111;padding:0 2px 0 2.5px;line-height:15px">00:03:19</div>
<div class="t" style="left:1585px;top:807px;width:101px;height:16px;overflow:hidden;text-align:right;font-size:13px;color:#111;padding:0 2px 0 2.5px;line-height:15px">1,52</div>
<div class="t" style="left:1686px;top:807px;width:58px;height:16px;overflow:hidden;text-align:left;font-size:13px;color:#111;padding:0 2px 0 2.5px;line-height:15px">00:00:00</div>
<div class="t" style="left:1744px;top:807px;width:72px;height:16px;overflow:hidden;text-align:right;font-size:13px;color:#111;padding:0 2px 0 2.5px;line-height:15px">0</div>
<div class="t" style="left:1816px;top:807px;width:14px;height:16px;overflow:hidden;text-align:left;font-size:13px;color:#111;padding:0 2px 0 2.5px;line-height:15px">00:00:00</div>
<svg class="abs" style="left:1326px;top:805px" width="6" height="6" viewBox="0 0 6 6"><path d="M0 0 H6 L0 6 Z" fill="#1e7e34"/></svg>
<div class="t" style="left:663px;top:826px;width:122px;height:16px;overflow:hidden;text-align:right;font-size:13px;color:#111;padding:0 2px 0 2.5px;line-height:15px">07/01/2025 15:40</div>
<div class="t" style="left:785px;top:826px;width:122px;height:16px;overflow:hidden;text-align:right;font-size:13px;color:#111;padding:0 2px 0 2.5px;line-height:15px">07/01/2025 15:50</div>
<div class="t" style="left:907px;top:826px;width:58px;height:16px;overflow:hidden;text-align:right;font-size:13px;color:#111;padding:0 2px 0 2.5px;line-height:15px">10431</div>
<div class="t" style="left:965px;top:826px;width:86px;height:16px;overflow:hidden;text-align:right;font-size:13px;color:#111;padding:0 2px 0 2.5px;line-height:15px">29981</div>
<div class="t" style="left:1051px;top:826px;width:130px;height:16px;overflow:hidden;text-align:left;font-size:13px;color:#111;padding:0 2px 0 2.5px;line-height:15px">VIVARES</div>
<div class="t" style="left:1181px;top:826px;width:86px;height:16px;overflow:hidden;text-align:left;font-size:13px;color:#111;padding:0 2px 0 2.5px;line-height:15px">A2500</div>
<div class="t" style="left:1267px;top:826px;width:59px;height:16px;overflow:hidden;text-align:right;font-size:13px;color:#111;padding:0 2px 0 2.5px;line-height:15px">4</div>
<div class="t" style="left:1326px;top:826px;width:129px;height:16px;overflow:hidden;text-align:left;font-size:13px;color:#111;padding:0 2px 0 2.5px;line-height:15px">4</div>
<div class="t" style="left:1455px;top:826px;width:130px;height:16px;overflow:hidden;text-align:left;font-size:13px;color:#111;padding:0 2px 0 2.5px;line-height:15px">00:06:25</div>
<div class="t" style="left:1585px;top:826px;width:101px;height:16px;overflow:hidden;text-align:right;font-size:13px;color:#111;padding:0 2px 0 2.5px;line-height:15px">4,04</div>
<div class="t" style="left:1686px;top:826px;width:58px;height:16px;overflow:hidden;text-align:left;font-size:13px;color:#111;padding:0 2px 0 2.5px;line-height:15px">00:00:00</div>
<div class="t" style="left:1744px;top:826px;width:72px;height:16px;overflow:hidden;text-align:right;font-size:13px;color:#111;padding:0 2px 0 2.5px;line-height:15px">0</div>
<div class="t" style="left:1816px;top:826px;width:14px;height:16px;overflow:hidden;text-align:left;font-size:13px;color:#111;padding:0 2px 0 2.5px;line-height:15px">00:00:00</div>
<svg class="abs" style="left:1326px;top:824px" width="6" height="6" viewBox="0 0 6 6"><path d="M0 0 H6 L0 6 Z" fill="#1e7e34"/></svg>
<div class="t" style="left:663px;top:845px;width:122px;height:16px;overflow:hidden;text-align:right;font-size:13px;color:#111;padding:0 2px 0 2.5px;line-height:15px">07/01/2025 15:40</div>
<div class="t" style="left:785px;top:845px;width:122px;height:16px;overflow:hidden;text-align:right;font-size:13px;color:#111;padding:0 2px 0 2.5px;line-height:15px">07/01/2025 15:50</div>
<div class="t" style="left:907px;top:845px;width:58px;height:16px;overflow:hidden;text-align:right;font-size:13px;color:#111;padding:0 2px 0 2.5px;line-height:15px">10431</div>
<div class="t" style="left:965px;top:845px;width:86px;height:16px;overflow:hidden;text-align:right;font-size:13px;color:#111;padding:0 2px 0 2.5px;line-height:15px">29981</div>
<div class="t" style="left:1051px;top:845px;width:130px;height:16px;overflow:hidden;text-align:left;font-size:13px;color:#111;padding:0 2px 0 2.5px;line-height:15px">VIVARES</div>
<div class="t" style="left:1181px;top:845px;width:86px;height:16px;overflow:hidden;text-align:left;font-size:13px;color:#111;padding:0 2px 0 2.5px;line-height:15px">A2500</div>
<div class="t" style="left:1267px;top:845px;width:59px;height:16px;overflow:hidden;text-align:right;font-size:13px;color:#111;padding:0 2px 0 2.5px;line-height:15px">5</div>
<div class="t" style="left:1326px;top:845px;width:129px;height:16px;overflow:hidden;text-align:left;font-size:13px;color:#111;padding:0 2px 0 2.5px;line-height:15px">5</div>
<div class="t" style="left:1455px;top:845px;width:130px;height:16px;overflow:hidden;text-align:left;font-size:13px;color:#111;padding:0 2px 0 2.5px;line-height:15px">00:06:25</div>
<div class="t" style="left:1585px;top:845px;width:101px;height:16px;overflow:hidden;text-align:right;font-size:13px;color:#111;padding:0 2px 0 2.5px;line-height:15px">4,3</div>
<div class="t" style="left:1686px;top:845px;width:58px;height:16px;overflow:hidden;text-align:left;font-size:13px;color:#111;padding:0 2px 0 2.5px;line-height:15px">00:00:00</div>
<div class="t" style="left:1744px;top:845px;width:72px;height:16px;overflow:hidden;text-align:right;font-size:13px;color:#111;padding:0 2px 0 2.5px;line-height:15px">0</div>
<div class="t" style="left:1816px;top:845px;width:14px;height:16px;overflow:hidden;text-align:left;font-size:13px;color:#111;padding:0 2px 0 2.5px;line-height:15px">00:00:00</div>
<svg class="abs" style="left:1326px;top:843px" width="6" height="6" viewBox="0 0 6 6"><path d="M0 0 H6 L0 6 Z" fill="#1e7e34"/></svg>
<div class="t" style="left:663px;top:864px;width:122px;height:16px;overflow:hidden;text-align:right;font-size:13px;color:#111;padding:0 2px 0 2.5px;line-height:15px">07/01/2025 15:40</div>
<div class="t" style="left:785px;top:864px;width:122px;height:16px;overflow:hidden;text-align:right;font-size:13px;color:#111;padding:0 2px 0 2.5px;line-height:15px">07/01/2025 15:50</div>
<div class="t" style="left:907px;top:864px;width:58px;height:16px;overflow:hidden;text-align:right;font-size:13px;color:#111;padding:0 2px 0 2.5px;line-height:15px">10431</div>
<div class="t" style="left:965px;top:864px;width:86px;height:16px;overflow:hidden;text-align:right;font-size:13px;color:#111;padding:0 2px 0 2.5px;line-height:15px">29981</div>
<div class="t" style="left:1051px;top:864px;width:130px;height:16px;overflow:hidden;text-align:left;font-size:13px;color:#111;padding:0 2px 0 2.5px;line-height:15px">VIVARES</div>
<div class="t" style="left:1181px;top:864px;width:86px;height:16px;overflow:hidden;text-align:left;font-size:13px;color:#111;padding:0 2px 0 2.5px;line-height:15px">A2500</div>
<div class="t" style="left:1267px;top:864px;width:59px;height:16px;overflow:hidden;text-align:right;font-size:13px;color:#111;padding:0 2px 0 2.5px;line-height:15px">6</div>
<div class="t" style="left:1326px;top:864px;width:129px;height:16px;overflow:hidden;text-align:left;font-size:13px;color:#111;padding:0 2px 0 2.5px;line-height:15px">6</div>
<div class="t" style="left:1455px;top:864px;width:130px;height:16px;overflow:hidden;text-align:left;font-size:13px;color:#111;padding:0 2px 0 2.5px;line-height:15px">00:06:25</div>
<div class="t" style="left:1585px;top:864px;width:101px;height:16px;overflow:hidden;text-align:right;font-size:13px;color:#111;padding:0 2px 0 2.5px;line-height:15px">1,15</div>
<div class="t" style="left:1686px;top:864px;width:58px;height:16px;overflow:hidden;text-align:left;font-size:13px;color:#111;padding:0 2px 0 2.5px;line-height:15px">00:00:00</div>
<div class="t" style="left:1744px;top:864px;width:72px;height:16px;overflow:hidden;text-align:right;font-size:13px;color:#111;padding:0 2px 0 2.5px;line-height:15px">0</div>
<div class="t" style="left:1816px;top:864px;width:14px;height:16px;overflow:hidden;text-align:left;font-size:13px;color:#111;padding:0 2px 0 2.5px;line-height:15px">00:00:00</div>
<svg class="abs" style="left:1326px;top:862px" width="6" height="6" viewBox="0 0 6 6"><path d="M0 0 H6 L0 6 Z" fill="#1e7e34"/></svg>
<div class="t" style="left:663px;top:883px;width:122px;height:16px;overflow:hidden;text-align:right;font-size:13px;color:#111;padding:0 2px 0 2.5px;line-height:15px">07/01/2025 15:40</div>
<div class="t" style="left:785px;top:883px;width:122px;height:16px;overflow:hidden;text-align:right;font-size:13px;color:#111;padding:0 2px 0 2.5px;line-height:15px">07/01/2025 15:50</div>
<div class="t" style="left:907px;top:883px;width:58px;height:16px;overflow:hidden;text-align:right;font-size:13px;color:#111;padding:0 2px 0 2.5px;line-height:15px">10431</div>
<div class="t" style="left:965px;top:883px;width:86px;height:16px;overflow:hidden;text-align:right;font-size:13px;color:#111;padding:0 2px 0 2.5px;line-height:15px">29981</div>
<div class="t" style="left:1051px;top:883px;width:130px;height:16px;overflow:hidden;text-align:left;font-size:13px;color:#111;padding:0 2px 0 2.5px;line-height:15px">VIVARES</div>
<div class="t" style="left:1181px;top:883px;width:86px;height:16px;overflow:hidden;text-align:left;font-size:13px;color:#111;padding:0 2px 0 2.5px;line-height:15px">A2500</div>
<div class="t" style="left:1267px;top:883px;width:59px;height:16px;overflow:hidden;text-align:right;font-size:13px;color:#111;padding:0 2px 0 2.5px;line-height:15px">11</div>
<div class="t" style="left:1326px;top:883px;width:129px;height:16px;overflow:hidden;text-align:left;font-size:13px;color:#111;padding:0 2px 0 2.5px;line-height:15px">11</div>
<div class="t" style="left:1455px;top:883px;width:130px;height:16px;overflow:hidden;text-align:left;font-size:13px;color:#111;padding:0 2px 0 2.5px;line-height:15px">00:03:19</div>
<div class="t" style="left:1585px;top:883px;width:101px;height:16px;overflow:hidden;text-align:right;font-size:13px;color:#111;padding:0 2px 0 2.5px;line-height:15px">1,93</div>
<div class="t" style="left:1686px;top:883px;width:58px;height:16px;overflow:hidden;text-align:left;font-size:13px;color:#111;padding:0 2px 0 2.5px;line-height:15px">00:00:00</div>
<div class="t" style="left:1744px;top:883px;width:72px;height:16px;overflow:hidden;text-align:right;font-size:13px;color:#111;padding:0 2px 0 2.5px;line-height:15px">0</div>
<div class="t" style="left:1816px;top:883px;width:14px;height:16px;overflow:hidden;text-align:left;font-size:13px;color:#111;padding:0 2px 0 2.5px;line-height:15px">00:00:00</div>
<svg class="abs" style="left:1326px;top:881px" width="6" height="6" viewBox="0 0 6 6"><path d="M0 0 H6 L0 6 Z" fill="#1e7e34"/></svg>
<div class="t" style="left:663px;top:902px;width:122px;height:16px;overflow:hidden;text-align:right;font-size:13px;color:#111;padding:0 2px 0 2.5px;line-height:15px">07/01/2025 15:40</div>
<div class="t" style="left:785px;top:902px;width:122px;height:16px;overflow:hidden;text-align:right;font-size:13px;color:#111;padding:0 2px 0 2.5px;line-height:15px">07/01/2025 15:50</div>
<div class="t" style="left:907px;top:902px;width:58px;height:16px;overflow:hidden;text-align:right;font-size:13px;color:#111;padding:0 2px 0 2.5px;line-height:15px">10431</div>
<div class="t" style="left:965px;top:902px;width:86px;height:16px;overflow:hidden;text-align:right;font-size:13px;color:#111;padding:0 2px 0 2.5px;line-height:15px">29981</div>
<div class="t" style="left:1051px;top:902px;width:130px;height:16px;overflow:hidden;text-align:left;font-size:13px;color:#111;padding:0 2px 0 2.5px;line-height:15px">VIVARES</div>
<div class="t" style="left:1181px;top:902px;width:86px;height:16px;overflow:hidden;text-align:left;font-size:13px;color:#111;padding:0 2px 0 2.5px;line-height:15px">A2500</div>
<div class="t" style="left:1267px;top:902px;width:59px;height:16px;overflow:hidden;text-align:right;font-size:13px;color:#111;padding:0 2px 0 2.5px;line-height:15px">9</div>
<div class="t" style="left:1326px;top:902px;width:129px;height:16px;overflow:hidden;text-align:left;font-size:13px;color:#111;padding:0 2px 0 2.5px;line-height:15px">9</div>
<div class="t" style="left:1455px;top:902px;width:130px;height:16px;overflow:hidden;text-align:left;font-size:13px;color:#111;padding:0 2px 0 2.5px;line-height:15px">00:06:25</div>
<div class="t" style="left:1585px;top:902px;width:101px;height:16px;overflow:hidden;text-align:right;font-size:13px;color:#111;padding:0 2px 0 2.5px;line-height:15px">3,51</div>
<div class="t" style="left:1686px;top:902px;width:58px;height:16px;overflow:hidden;text-align:left;font-size:13px;color:#111;padding:0 2px 0 2.5px;line-height:15px">00:00:00</div>
<div class="t" style="left:1744px;top:902px;width:72px;height:16px;overflow:hidden;text-align:right;font-size:13px;color:#111;padding:0 2px 0 2.5px;line-height:15px">0</div>
<div class="t" style="left:1816px;top:902px;width:14px;height:16px;overflow:hidden;text-align:left;font-size:13px;color:#111;padding:0 2px 0 2.5px;line-height:15px">00:00:00</div>
<svg class="abs" style="left:1326px;top:900px" width="6" height="6" viewBox="0 0 6 6"><path d="M0 0 H6 L0 6 Z" fill="#1e7e34"/></svg>
<div class="t" style="left:663px;top:921px;width:122px;height:16px;overflow:hidden;text-align:right;font-size:13px;color:#111;padding:0 2px 0 2.5px;line-height:15px">07/01/2025 15:50</div>
<div class="t" style="left:785px;top:921px;width:122px;height:16px;overflow:hidden;text-align:right;font-size:13px;color:#111;padding:0 2px 0 2.5px;line-height:15px">07/01/2025 16:00</div>
<div class="t" style="left:907px;top:921px;width:58px;height:16px;overflow:hidden;text-align:right;font-size:13px;color:#111;padding:0 2px 0 2.5px;line-height:15px">10431</div>
<div class="t" style="left:965px;top:921px;width:86px;height:16px;overflow:hidden;text-align:right;font-size:13px;color:#111;padding:0 2px 0 2.5px;line-height:15px">29981</div>
<div class="t" style="left:1051px;top:921px;width:130px;height:16px;overflow:hidden;text-align:left;font-size:13px;color:#111;padding:0 2px 0 2.5px;line-height:15px">VIVARES</div>
<div class="t" style="left:1181px;top:921px;width:86px;height:16px;overflow:hidden;text-align:left;font-size:13px;color:#111;padding:0 2px 0 2.5px;line-height:15px">A2500</div>
<div class="t" style="left:1267px;top:921px;width:59px;height:16px;overflow:hidden;text-align:right;font-size:13px;color:#111;padding:0 2px 0 2.5px;line-height:15px">9</div>
<div class="t" style="left:1326px;top:921px;width:129px;height:16px;overflow:hidden;text-align:left;font-size:13px;color:#111;padding:0 2px 0 2.5px;line-height:15px">9</div>
<div class="t" style="left:1455px;top:921px;width:130px;height:16px;overflow:hidden;text-align:left;font-size:13px;color:#111;padding:0 2px 0 2.5px;line-height:15px">00:10:00</div>
<div class="t" style="left:1585px;top:921px;width:101px;height:16px;overflow:hidden;text-align:right;font-size:13px;color:#111;padding:0 2px 0 2.5px;line-height:15px">4,31</div>
<div class="t" style="left:1686px;top:921px;width:58px;height:16px;overflow:hidden;text-align:left;font-size:13px;color:#111;padding:0 2px 0 2.5px;line-height:15px">00:00:00</div>
<div class="t" style="left:1744px;top:921px;width:72px;height:16px;overflow:hidden;text-align:right;font-size:13px;color:#111;padding:0 2px 0 2.5px;line-height:15px">0</div>
<div class="t" style="left:1816px;top:921px;width:14px;height:16px;overflow:hidden;text-align:left;font-size:13px;color:#111;padding:0 2px 0 2.5px;line-height:15px">00:00:00</div>
<svg class="abs" style="left:1326px;top:919px" width="6" height="6" viewBox="0 0 6 6"><path d="M0 0 H6 L0 6 Z" fill="#1e7e34"/></svg>
<div class="abs" style="left:1830px;top:376px;width:22px;height:560px;background:#efefef"></div>
<svg class="abs" style="left:1836px;top:378px" width="10" height="7" viewBox="0 0 10 7"><path d="M5 0.5 L9.5 6.5 H0.5 Z" fill="#777"/></svg>
<div class="abs" style="left:1837px;top:389px;width:8px;height:20px;background:#777;border-radius:4px"></div>
<svg class="abs" style="left:1836px;top:925px" width="10" height="7" viewBox="0 0 10 7"><path d="M5 6.5 L9.5 0.5 H0.5 Z" fill="#777"/></svg>
<div class="abs" style="left:638px;top:936px;width:1214px;height:32px;background:#efefef"></div>
<svg class="abs" style="left:665px;top:945px" width="8" height="13" viewBox="0 0 8 13"><path d="M6.5 1 L1.5 6.5 L6.5 12" fill="none" stroke="#aaa" stroke-width="1.1"/></svg>
<svg class="abs" style="left:698px;top:945px" width="8" height="13" viewBox="0 0 8 13"><path d="M1.5 1 L6.5 6.5 L1.5 12" fill="none" stroke="#aaa" stroke-width="1.1"/></svg>
<div class="abs" style="left:754px;top:936px;width:75px;height:28px;background:#fff;border-radius:0 0 5px 5px;box-shadow:0 1px 1px rgba(0,0,0,0.08)"></div>
<div class="t" style="left:754px;width:75px;text-align:center;top:943px;font-size:13.5px;font-weight:bold;color:#222">irrigation</div>
<div class="abs" style="left:762px;top:959px;width:59px;height:2px;background:#107c41;border-radius:1px"></div>
<div class="abs" style="left:833px;top:941px;width:1px;height:21px;background:#d0d0d0"></div>
<svg class="abs" style="left:874px;top:944px" width="14" height="14" viewBox="0 0 14 14"><path d="M7 1 V13 M1 7 H13" stroke="#333" stroke-width="1.2"/></svg>
<svg class="abs" style="left:1367px;top:945px" width="4" height="13" viewBox="0 0 4 13"><circle cx="2" cy="2" r="1.1" fill="#444"/><circle cx="2" cy="6.5" r="1.1" fill="#444"/><circle cx="2" cy="11" r="1.1" fill="#444"/></svg>
<svg class="abs" style="left:1388px;top:946px" width="8" height="10" viewBox="0 0 8 10"><path d="M7.5 0.5 V9.5 L0.5 5 Z" fill="#666"/></svg>
<div class="abs" style="left:1401px;top:946px;width:205px;height:10px;background:#777;border-radius:5px"></div>
<svg class="abs" style="left:1820px;top:946px" width="8" height="10" viewBox="0 0 8 10"><path d="M0.5 0.5 V9.5 L7.5 5 Z" fill="#666"/></svg>
<div class="abs" style="left:638px;top:968px;width:1214px;height:22px;background:#fafafa;border-radius:0 0 8px 8px"></div>
<div class="t" style="left:649px;top:975.4px;font-size:11.2px;color:#333;font-weight:normal;">Listo</div>
<svg class="abs" style="left:692px;top:970px" width="17" height="17" viewBox="0 0 17 17"><circle cx="8" cy="3" r="2" fill="none" stroke="#333" stroke-width="1"/><path d="M2 6 L14 6 M5 6 L6 11 L3 15 M11 6 L10 11 M10 11 L11 13" fill="none" stroke="#333" stroke-width="1"/><path d="M10 11 L16 16 M16 11 L10 16" stroke="#333" stroke-width="1"/></svg>
<div class="t" style="left:711px;top:973.5px;font-size:11px;color:#222;font-weight:bold;letter-spacing:-0.12px">Accesibilidad: es necesario investigar</div>
<svg class="abs" style="left:1343px;top:971px" width="16" height="15" viewBox="0 0 16 15"><rect x="1" y="1" width="13" height="10" fill="none" stroke="#444" stroke-width="1"/><circle cx="10" cy="11" r="3" fill="#fff" stroke="#444" stroke-width="1"/></svg>
<div class="t" style="left:1361px;top:973.1px;font-size:11.7px;color:#333;font-weight:normal;">Configuración de visualización</div>
<div class="abs" style="left:1540px;top:968px;width:40px;height:21px;background:#e8e8e8"></div>
<svg class="abs" style="left:1550px;top:972px" width="14" height="14" viewBox="0 0 14 14"><rect x="1" y="1" width="12" height="12" fill="none" stroke="#333" stroke-width="1"/><path d="M5 1 V13 M9 1 V13 M1 5 H13 M1 9 H13" stroke="#333" stroke-width="1"/></svg>
<svg class="abs" style="left:1590px;top:972px" width="15" height="14" viewBox="0 0 15 14"><rect x="1" y="1" width="13" height="12" fill="none" stroke="#333" stroke-width="1"/><rect x="3.5" y="3.5" width="8" height="7" fill="none" stroke="#333" stroke-width="1"/><path d="M5 5.5 H10 M5 7 H10 M5 8.5 H10" stroke="#333" stroke-width="0.7"/></svg>
<svg class="abs" style="left:1630px;top:972px" width="15" height="14" viewBox="0 0 15 14"><rect x="1" y="1" width="13" height="12" fill="none" stroke="#333" stroke-width="1"/><path d="M1 7.5 H7 V1 M10 1 V5" fill="none" stroke="#333" stroke-width="1.2"/></svg>
<div class="abs" style="left:1663px;top:979px;width:9px;height:1px;background:#444"></div>
<div class="abs" style="left:1678px;top:979px;width:103px;height:1px;background:#999"></div>
<div class="abs" style="left:1724px;top:972px;width:5px;height:13px;background:#555"></div>
<svg class="abs" style="left:1780px;top:974px" width="11" height="11" viewBox="0 0 11 11"><path d="M5.5 0.5 V10.5 M0.5 5.5 H10.5" stroke="#444" stroke-width="1"/></svg>
<div class="t" style="left:1803px;top:973.2px;font-size:11.5px;color:#444;font-weight:normal;">100 %</div>
<div class="abs" style="left:637px;top:114px;width:1216px;height:877px;border:1px solid #737373;border-radius:8px;pointer-events:none"></div>
</body></html>
